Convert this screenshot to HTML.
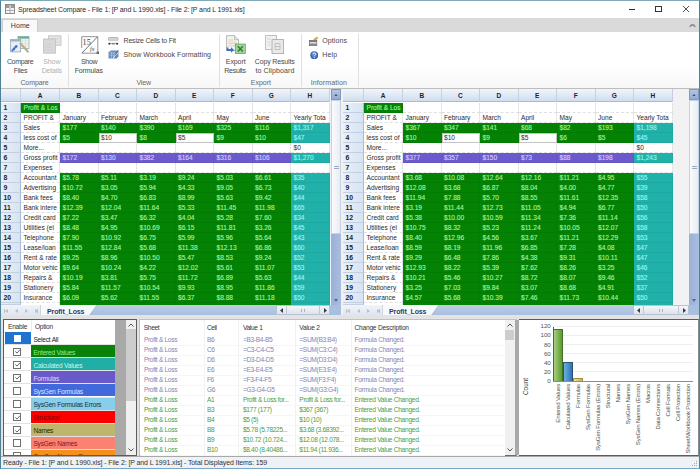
<!DOCTYPE html><html><head><meta charset="utf-8"><style>

*{box-sizing:border-box;margin:0;padding:0}
html,body{width:700px;height:469px;overflow:hidden;background:#fff;font-family:"Liberation Sans", sans-serif;position:relative}
div,span,svg{position:absolute}
.t{white-space:nowrap;line-height:1}
.hdr{background:linear-gradient(#f1f5fb,#d0ddef);border-right:1px solid #c3d0e2;border-bottom:1px solid #a9bcd6;font-size:6.5px;font-weight:bold;color:#1e1e1e;text-align:center;line-height:14px}
.rh{background:linear-gradient(90deg,#e9f0f9,#d8e4f3);border-right:1px solid #a9bcd6;border-bottom:1px solid #c3d0e2;font-size:6.8px;font-weight:bold;color:#1e1e1e;padding-left:2.5px;line-height:10px}
.cell{font-size:6.6px;line-height:10px;padding-left:2.5px;white-space:nowrap;overflow:hidden;border-right:1px dashed #e0e0e0;border-bottom:1px dashed #e0e0e0}
.cell.col{border-right:1px solid rgba(0,0,0,0.035);border-bottom:1px solid rgba(0,0,0,0.05);-webkit-text-stroke:0.12px currentColor}
.cell.boxed{border:1px solid #c4c4c4;background:#fff;line-height:8px;padding-left:1.5px}

</style></head><body>
<div style="left:0;top:0;width:700px;height:469px;border:1px solid #4f8196;border-top-color:#7fa9b6;border-bottom-color:#7aa6c8;z-index:50"></div>
<svg style="left:5px;top:4px" width="10" height="10" viewBox="0 0 10 10"><rect x="0.5" y="0.5" width="9" height="9" fill="#f4f4f4" stroke="#8a8a8a"/><rect x="1" y="1" width="3.5" height="3" fill="#9a9a9a"/><rect x="5.5" y="1" width="3.5" height="3" fill="#9a9a9a"/><path d="M1 6.5h8M5 4v5.5" stroke="#9a9a9a" stroke-width="0.8"/></svg>
<div class="t" style="left:17.90px;top:6px;font-size:7px;color:#2a2a2a;letter-spacing:-0.125px">Spreadsheet Compare - File 1: [P and L 1990.xls] - File 2: [P and L 1991.xls]</div>
<div style="left:629.3px;top:8.6px;width:5.7px;height:0.9px;background:#333"></div>
<div style="left:655.4px;top:6.3px;width:6.3px;height:5.8px;border:0.9px solid #333"></div>
<svg style="left:682.9px;top:6.4px" width="6" height="6" viewBox="0 0 6 6"><path d="M0 0L6 6M6 0L0 6" stroke="#333" stroke-width="0.85"/></svg>
<div style="left:1px;top:18px;width:698px;height:14.2px;background:#dadada"></div>
<div style="left:2.1px;top:18.5px;width:35.8px;height:14.5px;background:#f9f9f9;border:1px solid #cfcfcf;border-bottom:none"></div>
<div class="t" style="left:10.80px;top:22px;font-size:7px;color:#333;letter-spacing:0.076px">Home</div>
<svg style="left:689px;top:22.5px" width="7" height="5" viewBox="0 0 7 5"><path d="M0.8 4.2A2.7 2.7 0 0 1 6.2 4.2M2 3.5L3.5 2L5 3.5" stroke="#666" stroke-width="0.8" fill="none"/></svg>
<div style="left:1px;top:32.2px;width:698px;height:56.5px;background:linear-gradient(#fff 60%,#f7f7f7);border-bottom:1.3px solid #bdbdbd"></div>
<div style="left:68.4px;top:34px;width:1px;height:53px;background:#e0e0e0"></div>
<div style="left:218.5px;top:34px;width:1px;height:53px;background:#e0e0e0"></div>
<div style="left:301.2px;top:34px;width:1px;height:53px;background:#e0e0e0"></div>
<div style="left:357.9px;top:34px;width:1px;height:53px;background:#e0e0e0"></div>
<div class="t" style="left:6.90px;top:58px;font-size:7px;color:#484848;letter-spacing:-0.348px">Compare</div>
<div class="t" style="left:13.80px;top:67px;font-size:7px;color:#484848;letter-spacing:-0.270px">Files</div>
<div class="t" style="left:43.20px;top:58px;font-size:7px;color:#b0b0b0;letter-spacing:-0.070px">Show</div>
<div class="t" style="left:41.70px;top:67px;font-size:7px;color:#b0b0b0;letter-spacing:-0.166px">Details</div>
<div class="t" style="left:20.40px;top:79px;font-size:7px;color:#666;letter-spacing:-0.082px">Compare</div>
<div class="t" style="left:81.00px;top:58px;font-size:7px;color:#484848;letter-spacing:-0.337px">Show</div>
<div class="t" style="left:74.70px;top:67px;font-size:7px;color:#484848;letter-spacing:-0.125px">Formulas</div>
<div class="t" style="left:123.60px;top:37px;font-size:7px;color:#484848;letter-spacing:-0.222px">Resize Cells to Fit</div>
<div class="t" style="left:123.60px;top:51px;font-size:7px;color:#484848;letter-spacing:0.050px">Show Workbook Formatting</div>
<div class="t" style="left:136.40px;top:79px;font-size:7px;color:#666;letter-spacing:-0.115px">View</div>
<div class="t" style="left:225.80px;top:58px;font-size:7px;color:#484848;letter-spacing:-0.086px">Export</div>
<div class="t" style="left:224.30px;top:67px;font-size:7px;color:#484848;letter-spacing:-0.274px">Results</div>
<div class="t" style="left:254.80px;top:58px;font-size:7px;color:#484848;letter-spacing:-0.157px">Copy Results</div>
<div class="t" style="left:255.40px;top:67px;font-size:7px;color:#484848;letter-spacing:0.105px">to Clipboard</div>
<div class="t" style="left:250.80px;top:79px;font-size:7px;color:#666;letter-spacing:-0.026px">Export</div>
<div class="t" style="left:322.20px;top:37px;font-size:7px;color:#484848;letter-spacing:0.096px">Options</div>
<div class="t" style="left:322.20px;top:51px;font-size:7px;color:#484848;letter-spacing:0.201px">Help</div>
<div class="t" style="left:310.70px;top:79px;font-size:7px;color:#666;letter-spacing:0.118px">Information</div>
<svg style="position:absolute;left:10px;top:35.5px" width="20" height="17" viewBox="0 0 20 17"><rect x="8" y="0.5" width="11" height="12" fill="#f2f6f4" stroke="#8fb0a6" stroke-width="0.8"/><rect x="8" y="0.5" width="11" height="2.2" fill="#6fae9c"/><path d="M8.5 5h10M8.5 7.5h10M8.5 10h10M12 3v9M15.5 3v9" stroke="#c9d6d2" stroke-width="0.6"/><rect x="0.6" y="3.5" width="10" height="12.4" fill="#e6edf4" stroke="#94a8b8" stroke-width="0.8"/><rect x="0.6" y="3.5" width="10" height="2" fill="#9fb3bf"/><path d="M2 15L7 9.5" stroke="#3d6ec4" stroke-width="2.4"/><path d="M2.5 13.5l1.5 1.5M4.5 11.5l1.5 1.5" stroke="#9ec0ee" stroke-width="0.8"/><path d="M10 7L18.5 16.2" stroke="#b8ad8a" stroke-width="2"/></svg>
<svg style="position:absolute;left:42.5px;top:35px" width="19" height="19" viewBox="0 0 19 19"><rect x="5.5" y="0.8" width="12.5" height="9.5" fill="#e4e4e4" stroke="#c6c6c6" stroke-width="0.9"/><path d="M8 4h8M8 7h8" stroke="#cfcfcf" stroke-width="0.7"/><rect x="0.6" y="4" width="11.8" height="14.2" fill="#d9d9d9" stroke="#c2c2c2" stroke-width="0.9"/><path d="M2.5 9h7M2.5 12h7M2.5 15h7" stroke="#c8c8c8" stroke-width="0.7"/></svg>
<svg style="position:absolute;left:80.5px;top:36px" width="18" height="18" viewBox="0 0 18 18"><path d="M0.7 12V0.7H16.8V17.2H0.7" fill="none" stroke="#8a8a8a" stroke-width="0.9"/><path d="M1 17L16.5 0.8" stroke="#666" stroke-width="0.9"/><text x="1.6" y="8.6" font-size="8.2" font-family="Liberation Serif" fill="#444">15</text><text x="9" y="15.2" font-size="6.3" font-style="italic" font-family="Liberation Serif" fill="#444">fx</text><rect x="15.6" y="15.6" width="2.4" height="2.4" fill="#666"/></svg>
<svg style="position:absolute;left:108px;top:36.5px" width="10.5" height="8.5" viewBox="0 0 10.5 8.5"><rect x="0.5" y="0.5" width="9.5" height="3.2" rx="0.8" fill="#d2d2d2" stroke="#a6a6a6" stroke-width="0.7"/><rect x="0.8" y="3.7" width="9" height="2.2" fill="#f6f6f6"/><path d="M1 6.6h8.5" stroke="#8a8a8a" stroke-width="0.8"/><circle cx="1.3" cy="6.8" r="1" fill="#333"/><circle cx="9.2" cy="6.8" r="1" fill="#333"/><path d="M4 7.2q1.2-1 2.5 0" stroke="#555" stroke-width="0.8" fill="none"/></svg>
<svg style="position:absolute;left:108px;top:50px" width="11" height="9" viewBox="0 0 11 9"><path d="M0.5 2L3 0.5H10.5V7L8 8.5H0.5z" fill="#6d8fbf"/><path d="M1.5 3h6M1.5 5.2h6M3.5 2v6M6 2v6" stroke="#b6cae6" stroke-width="0.6"/><path d="M5 8L10 3" stroke="#e4eef8" stroke-width="0.9"/><path d="M8 2V8.5M8 2L10.5 0.5" stroke="#4e6e9e" stroke-width="0.6"/></svg>
<svg style="position:absolute;left:226px;top:35px" width="20" height="19" viewBox="0 0 20 19"><path d="M0.6 0.6H8.5L12.5 4.6V15.5H0.6z" fill="#f3f3f3" stroke="#a8a8a8" stroke-width="0.8"/><path d="M8.5 0.6V4.6H12.5" fill="#e0e0e0" stroke="#a8a8a8" stroke-width="0.6"/><path d="M2.5 5h5M2.5 8.6h8M2.5 11h8" stroke="#c4c4c4" stroke-width="0.7"/><rect x="2" y="6.3" width="9" height="1.4" fill="#efe2b0"/><rect x="9.3" y="9" width="10" height="9.5" fill="#9fd49a" stroke="#5a9a5a" stroke-width="0.7"/><path d="M11.8 11.2l5 5.2M16.8 11.2l-5 5.2" stroke="#2f7f2f" stroke-width="1.5"/><path d="M1.5 12.5v2.5h4" stroke="#3f6fbf" stroke-width="1.8" fill="none"/><path d="M5 12.3L8.2 15L5 17.8z" fill="#3f6fbf"/></svg>
<svg style="position:absolute;left:265px;top:35px" width="20" height="19" viewBox="0 0 20 19"><rect x="0.6" y="0.6" width="11" height="14" fill="#f1f1f1" stroke="#b2b2b2" stroke-width="0.8"/><path d="M2.5 4h3M2.5 7h3M2.5 10h3" stroke="#c8c8c8" stroke-width="0.8"/><rect x="7" y="4.6" width="11.6" height="14" fill="#e9e9e9" stroke="#a6a6a6" stroke-width="0.8"/><path d="M10 8.5h5v6h-5z" fill="none" stroke="#b8b8b8" stroke-width="0.8"/><path d="M10 11.5h5" stroke="#b8b8b8" stroke-width="0.8"/></svg>
<svg style="position:absolute;left:308.5px;top:35.5px" width="10" height="10" viewBox="0 0 10 10"><path d="M4 3.5L7.5 0.5L9.6 2.3L6.5 4.8z" fill="#d7c468"/><path d="M5 4.2L8.5 1.5" stroke="#9c8a30" stroke-width="0.6"/><rect x="0.3" y="4.5" width="7.5" height="5.2" fill="#e6e6e6" stroke="#5a5a5a" stroke-width="0.7"/><rect x="0.3" y="4.5" width="7.5" height="1.6" fill="#7a7a7a"/><path d="M1 8.2h6" stroke="#444" stroke-width="0.9"/></svg>
<svg style="position:absolute;left:309.5px;top:50.8px" width="8.5" height="8.5" viewBox="0 0 8.5 8.5"><circle cx="4.25" cy="4.25" r="4" fill="#3f67b4"/><circle cx="4.25" cy="3.5" r="2.6" fill="#6f95d6" opacity="0.6"/><path d="M2.9 3.3q0-1.4 1.4-1.4q1.4 0 1.4 1.2q0 0.8-1 1.2q-0.4 0.2-0.4 0.9" stroke="#fff" stroke-width="0.9" fill="none"/><circle cx="4.3" cy="6.5" r="0.55" fill="#fff"/></svg>
<div class="hdr" style="left:1px;top:89.3px;width:20px;height:13.2px"></div>
<div class="hdr" style="left:21px;top:89.3px;width:39px;height:13.2px">A</div>
<div class="hdr" style="left:60px;top:89.3px;width:38.5px;height:13.2px">B</div>
<div class="hdr" style="left:98.5px;top:89.3px;width:38.5px;height:13.2px">C</div>
<div class="hdr" style="left:137px;top:89.3px;width:38.5px;height:13.2px">D</div>
<div class="hdr" style="left:175.5px;top:89.3px;width:38.5px;height:13.2px">E</div>
<div class="hdr" style="left:214px;top:89.3px;width:38.5px;height:13.2px">F</div>
<div class="hdr" style="left:252.5px;top:89.3px;width:38.5px;height:13.2px">G</div>
<div class="hdr" style="left:291px;top:89.3px;width:38.5px;height:13.2px">H</div>
<div class="rh" style="left:1px;top:102.5px;width:20px;height:10.03px">1</div>
<div class="rh" style="left:1px;top:112.53px;width:20px;height:10.03px">2</div>
<div class="rh" style="left:1px;top:122.56px;width:20px;height:10.03px">3</div>
<div class="rh" style="left:1px;top:132.59px;width:20px;height:10.03px">4</div>
<div class="rh" style="left:1px;top:142.62px;width:20px;height:10.03px">5</div>
<div class="rh" style="left:1px;top:152.65px;width:20px;height:10.03px">6</div>
<div class="rh" style="left:1px;top:162.68px;width:20px;height:10.03px">7</div>
<div class="rh" style="left:1px;top:172.70999999999998px;width:20px;height:10.03px">8</div>
<div class="rh" style="left:1px;top:182.74px;width:20px;height:10.03px">9</div>
<div class="rh" style="left:1px;top:192.76999999999998px;width:20px;height:10.03px">10</div>
<div class="rh" style="left:1px;top:202.8px;width:20px;height:10.03px">11</div>
<div class="rh" style="left:1px;top:212.82999999999998px;width:20px;height:10.03px">12</div>
<div class="rh" style="left:1px;top:222.85999999999999px;width:20px;height:10.03px">13</div>
<div class="rh" style="left:1px;top:232.89px;width:20px;height:10.03px">14</div>
<div class="rh" style="left:1px;top:242.92px;width:20px;height:10.03px">15</div>
<div class="rh" style="left:1px;top:252.95px;width:20px;height:10.03px">16</div>
<div class="rh" style="left:1px;top:262.98px;width:20px;height:10.03px">17</div>
<div class="rh" style="left:1px;top:273.01px;width:20px;height:10.03px">18</div>
<div class="rh" style="left:1px;top:283.03999999999996px;width:20px;height:10.03px">19</div>
<div class="rh" style="left:1px;top:293.07px;width:20px;height:10.03px">20</div>
<div class="rh" style="left:1px;top:303.1px;width:20px;height:2.099999999999966px"></div>
<div class="cell col" style="left:21px;top:102.5px;width:39px;height:10.03px;color:#a6f2a2;background:#048204;">Profit & Los</div>
<div class="cell" style="left:60px;top:102.5px;width:38.5px;height:10.03px;color:#2a2a2a;"></div>
<div class="cell" style="left:98.5px;top:102.5px;width:38.5px;height:10.03px;color:#2a2a2a;"></div>
<div class="cell" style="left:137px;top:102.5px;width:38.5px;height:10.03px;color:#2a2a2a;"></div>
<div class="cell" style="left:175.5px;top:102.5px;width:38.5px;height:10.03px;color:#2a2a2a;"></div>
<div class="cell" style="left:214px;top:102.5px;width:38.5px;height:10.03px;color:#2a2a2a;"></div>
<div class="cell" style="left:252.5px;top:102.5px;width:38.5px;height:10.03px;color:#2a2a2a;"></div>
<div class="cell" style="left:291px;top:102.5px;width:38.5px;height:10.03px;color:#2a2a2a;"></div>
<div class="cell" style="left:21px;top:112.53px;width:39px;height:10.03px;color:#2a2a2a;">PROFIT &</div>
<div class="cell" style="left:60px;top:112.53px;width:38.5px;height:10.03px;color:#2a2a2a;">January</div>
<div class="cell" style="left:98.5px;top:112.53px;width:38.5px;height:10.03px;color:#2a2a2a;">February</div>
<div class="cell" style="left:137px;top:112.53px;width:38.5px;height:10.03px;color:#2a2a2a;">March</div>
<div class="cell" style="left:175.5px;top:112.53px;width:38.5px;height:10.03px;color:#2a2a2a;">April</div>
<div class="cell" style="left:214px;top:112.53px;width:38.5px;height:10.03px;color:#2a2a2a;">May</div>
<div class="cell" style="left:252.5px;top:112.53px;width:38.5px;height:10.03px;color:#2a2a2a;">June</div>
<div class="cell" style="left:291px;top:112.53px;width:38.5px;height:10.03px;color:#2a2a2a;">Yearly Tota</div>
<div class="cell" style="left:21px;top:122.56px;width:39px;height:10.03px;color:#2a2a2a;">Sales</div>
<div class="cell col" style="left:60px;top:122.56px;width:38.5px;height:10.03px;color:#a6f2a2;background:#048204;">$177</div>
<div class="cell col" style="left:98.5px;top:122.56px;width:38.5px;height:10.03px;color:#a6f2a2;background:#048204;">$140</div>
<div class="cell col" style="left:137px;top:122.56px;width:38.5px;height:10.03px;color:#a6f2a2;background:#048204;">$390</div>
<div class="cell col" style="left:175.5px;top:122.56px;width:38.5px;height:10.03px;color:#a6f2a2;background:#048204;">$169</div>
<div class="cell col" style="left:214px;top:122.56px;width:38.5px;height:10.03px;color:#a6f2a2;background:#048204;">$325</div>
<div class="cell col" style="left:252.5px;top:122.56px;width:38.5px;height:10.03px;color:#a6f2a2;background:#048204;">$116</div>
<div class="cell col" style="left:291px;top:122.56px;width:38.5px;height:10.03px;color:#9ef4ec;background:#20b2aa;">$1,317</div>
<div class="cell" style="left:21px;top:132.59px;width:39px;height:10.03px;color:#2a2a2a;">less cost of</div>
<div class="cell col" style="left:60px;top:132.59px;width:38.5px;height:10.03px;color:#a6f2a2;background:#048204;">$5</div>
<div class="cell boxed" style="left:98.5px;top:132.59px;width:38.5px;height:10.03px;color:#2a2a2a;">$10</div>
<div class="cell col" style="left:137px;top:132.59px;width:38.5px;height:10.03px;color:#a6f2a2;background:#048204;">$8</div>
<div class="cell boxed" style="left:175.5px;top:132.59px;width:38.5px;height:10.03px;color:#2a2a2a;">$5</div>
<div class="cell col" style="left:214px;top:132.59px;width:38.5px;height:10.03px;color:#a6f2a2;background:#048204;">$9</div>
<div class="cell col" style="left:252.5px;top:132.59px;width:38.5px;height:10.03px;color:#a6f2a2;background:#048204;">$10</div>
<div class="cell col" style="left:291px;top:132.59px;width:38.5px;height:10.03px;color:#9ef4ec;background:#20b2aa;">$47</div>
<div class="cell" style="left:21px;top:142.62px;width:39px;height:10.03px;color:#2a2a2a;">More...</div>
<div class="cell" style="left:60px;top:142.62px;width:38.5px;height:10.03px;color:#2a2a2a;"></div>
<div class="cell" style="left:98.5px;top:142.62px;width:38.5px;height:10.03px;color:#2a2a2a;"></div>
<div class="cell" style="left:137px;top:142.62px;width:38.5px;height:10.03px;color:#2a2a2a;"></div>
<div class="cell" style="left:175.5px;top:142.62px;width:38.5px;height:10.03px;color:#2a2a2a;"></div>
<div class="cell" style="left:214px;top:142.62px;width:38.5px;height:10.03px;color:#2a2a2a;"></div>
<div class="cell" style="left:252.5px;top:142.62px;width:38.5px;height:10.03px;color:#2a2a2a;"></div>
<div class="cell" style="left:291px;top:142.62px;width:38.5px;height:10.03px;color:#2a2a2a;">$0</div>
<div class="cell" style="left:21px;top:152.65px;width:39px;height:10.03px;color:#2a2a2a;">Gross profit</div>
<div class="cell col" style="left:60px;top:152.65px;width:38.5px;height:10.03px;color:#d4ceff;background:#6a5acd;">$172</div>
<div class="cell col" style="left:98.5px;top:152.65px;width:38.5px;height:10.03px;color:#d4ceff;background:#6a5acd;">$130</div>
<div class="cell col" style="left:137px;top:152.65px;width:38.5px;height:10.03px;color:#d4ceff;background:#6a5acd;">$382</div>
<div class="cell col" style="left:175.5px;top:152.65px;width:38.5px;height:10.03px;color:#d4ceff;background:#6a5acd;">$164</div>
<div class="cell col" style="left:214px;top:152.65px;width:38.5px;height:10.03px;color:#d4ceff;background:#6a5acd;">$316</div>
<div class="cell col" style="left:252.5px;top:152.65px;width:38.5px;height:10.03px;color:#d4ceff;background:#6a5acd;">$106</div>
<div class="cell col" style="left:291px;top:152.65px;width:38.5px;height:10.03px;color:#9ef4ec;background:#20b2aa;">$1,270</div>
<div class="cell" style="left:21px;top:162.68px;width:39px;height:10.03px;color:#2a2a2a;">Expenses</div>
<div class="cell" style="left:60px;top:162.68px;width:38.5px;height:10.03px;color:#2a2a2a;"></div>
<div class="cell" style="left:98.5px;top:162.68px;width:38.5px;height:10.03px;color:#2a2a2a;"></div>
<div class="cell" style="left:137px;top:162.68px;width:38.5px;height:10.03px;color:#2a2a2a;"></div>
<div class="cell" style="left:175.5px;top:162.68px;width:38.5px;height:10.03px;color:#2a2a2a;"></div>
<div class="cell" style="left:214px;top:162.68px;width:38.5px;height:10.03px;color:#2a2a2a;"></div>
<div class="cell" style="left:252.5px;top:162.68px;width:38.5px;height:10.03px;color:#2a2a2a;"></div>
<div class="cell" style="left:291px;top:162.68px;width:38.5px;height:10.03px;color:#2a2a2a;"></div>
<div class="cell" style="left:21px;top:172.70999999999998px;width:39px;height:10.03px;color:#2a2a2a;">Accountant</div>
<div class="cell col" style="left:60px;top:172.70999999999998px;width:38.5px;height:10.03px;color:#a6f2a2;background:#048204;">$5.78</div>
<div class="cell col" style="left:98.5px;top:172.70999999999998px;width:38.5px;height:10.03px;color:#a6f2a2;background:#048204;">$5.11</div>
<div class="cell col" style="left:137px;top:172.70999999999998px;width:38.5px;height:10.03px;color:#a6f2a2;background:#048204;">$3.19</div>
<div class="cell col" style="left:175.5px;top:172.70999999999998px;width:38.5px;height:10.03px;color:#a6f2a2;background:#048204;">$9.24</div>
<div class="cell col" style="left:214px;top:172.70999999999998px;width:38.5px;height:10.03px;color:#a6f2a2;background:#048204;">$5.03</div>
<div class="cell col" style="left:252.5px;top:172.70999999999998px;width:38.5px;height:10.03px;color:#a6f2a2;background:#048204;">$6.61</div>
<div class="cell col" style="left:291px;top:172.70999999999998px;width:38.5px;height:10.03px;color:#9ef4ec;background:#20b2aa;">$35</div>
<div class="cell" style="left:21px;top:182.74px;width:39px;height:10.03px;color:#2a2a2a;">Advertising</div>
<div class="cell col" style="left:60px;top:182.74px;width:38.5px;height:10.03px;color:#a6f2a2;background:#048204;">$10.72</div>
<div class="cell col" style="left:98.5px;top:182.74px;width:38.5px;height:10.03px;color:#a6f2a2;background:#048204;">$3.05</div>
<div class="cell col" style="left:137px;top:182.74px;width:38.5px;height:10.03px;color:#a6f2a2;background:#048204;">$5.94</div>
<div class="cell col" style="left:175.5px;top:182.74px;width:38.5px;height:10.03px;color:#a6f2a2;background:#048204;">$4.33</div>
<div class="cell col" style="left:214px;top:182.74px;width:38.5px;height:10.03px;color:#a6f2a2;background:#048204;">$9.05</div>
<div class="cell col" style="left:252.5px;top:182.74px;width:38.5px;height:10.03px;color:#a6f2a2;background:#048204;">$6.73</div>
<div class="cell col" style="left:291px;top:182.74px;width:38.5px;height:10.03px;color:#9ef4ec;background:#20b2aa;">$40</div>
<div class="cell" style="left:21px;top:192.76999999999998px;width:39px;height:10.03px;color:#2a2a2a;">Bank fees</div>
<div class="cell col" style="left:60px;top:192.76999999999998px;width:38.5px;height:10.03px;color:#a6f2a2;background:#048204;">$8.40</div>
<div class="cell col" style="left:98.5px;top:192.76999999999998px;width:38.5px;height:10.03px;color:#a6f2a2;background:#048204;">$4.70</div>
<div class="cell col" style="left:137px;top:192.76999999999998px;width:38.5px;height:10.03px;color:#a6f2a2;background:#048204;">$6.83</div>
<div class="cell col" style="left:175.5px;top:192.76999999999998px;width:38.5px;height:10.03px;color:#a6f2a2;background:#048204;">$8.99</div>
<div class="cell col" style="left:214px;top:192.76999999999998px;width:38.5px;height:10.03px;color:#a6f2a2;background:#048204;">$5.63</div>
<div class="cell col" style="left:252.5px;top:192.76999999999998px;width:38.5px;height:10.03px;color:#a6f2a2;background:#048204;">$9.42</div>
<div class="cell col" style="left:291px;top:192.76999999999998px;width:38.5px;height:10.03px;color:#9ef4ec;background:#20b2aa;">$44</div>
<div class="cell" style="left:21px;top:202.8px;width:39px;height:10.03px;color:#2a2a2a;">Bank intere</div>
<div class="cell col" style="left:60px;top:202.8px;width:38.5px;height:10.03px;color:#a6f2a2;background:#048204;">$12.39</div>
<div class="cell col" style="left:98.5px;top:202.8px;width:38.5px;height:10.03px;color:#a6f2a2;background:#048204;">$12.04</div>
<div class="cell col" style="left:137px;top:202.8px;width:38.5px;height:10.03px;color:#a6f2a2;background:#048204;">$11.64</div>
<div class="cell col" style="left:175.5px;top:202.8px;width:38.5px;height:10.03px;color:#a6f2a2;background:#048204;">$5.33</div>
<div class="cell col" style="left:214px;top:202.8px;width:38.5px;height:10.03px;color:#a6f2a2;background:#048204;">$11.45</div>
<div class="cell col" style="left:252.5px;top:202.8px;width:38.5px;height:10.03px;color:#a6f2a2;background:#048204;">$11.98</div>
<div class="cell col" style="left:291px;top:202.8px;width:38.5px;height:10.03px;color:#9ef4ec;background:#20b2aa;">$65</div>
<div class="cell" style="left:21px;top:212.82999999999998px;width:39px;height:10.03px;color:#2a2a2a;">Credit card</div>
<div class="cell col" style="left:60px;top:212.82999999999998px;width:38.5px;height:10.03px;color:#a6f2a2;background:#048204;">$7.22</div>
<div class="cell col" style="left:98.5px;top:212.82999999999998px;width:38.5px;height:10.03px;color:#a6f2a2;background:#048204;">$3.47</div>
<div class="cell col" style="left:137px;top:212.82999999999998px;width:38.5px;height:10.03px;color:#a6f2a2;background:#048204;">$6.32</div>
<div class="cell col" style="left:175.5px;top:212.82999999999998px;width:38.5px;height:10.03px;color:#a6f2a2;background:#048204;">$4.04</div>
<div class="cell col" style="left:214px;top:212.82999999999998px;width:38.5px;height:10.03px;color:#a6f2a2;background:#048204;">$5.28</div>
<div class="cell col" style="left:252.5px;top:212.82999999999998px;width:38.5px;height:10.03px;color:#a6f2a2;background:#048204;">$7.60</div>
<div class="cell col" style="left:291px;top:212.82999999999998px;width:38.5px;height:10.03px;color:#9ef4ec;background:#20b2aa;">$34</div>
<div class="cell" style="left:21px;top:222.85999999999999px;width:39px;height:10.03px;color:#2a2a2a;">Utilities (el</div>
<div class="cell col" style="left:60px;top:222.85999999999999px;width:38.5px;height:10.03px;color:#a6f2a2;background:#048204;">$8.48</div>
<div class="cell col" style="left:98.5px;top:222.85999999999999px;width:38.5px;height:10.03px;color:#a6f2a2;background:#048204;">$4.95</div>
<div class="cell col" style="left:137px;top:222.85999999999999px;width:38.5px;height:10.03px;color:#a6f2a2;background:#048204;">$10.69</div>
<div class="cell col" style="left:175.5px;top:222.85999999999999px;width:38.5px;height:10.03px;color:#a6f2a2;background:#048204;">$6.15</div>
<div class="cell col" style="left:214px;top:222.85999999999999px;width:38.5px;height:10.03px;color:#a6f2a2;background:#048204;">$11.81</div>
<div class="cell col" style="left:252.5px;top:222.85999999999999px;width:38.5px;height:10.03px;color:#a6f2a2;background:#048204;">$3.26</div>
<div class="cell col" style="left:291px;top:222.85999999999999px;width:38.5px;height:10.03px;color:#9ef4ec;background:#20b2aa;">$45</div>
<div class="cell" style="left:21px;top:232.89px;width:39px;height:10.03px;color:#2a2a2a;">Telephone</div>
<div class="cell col" style="left:60px;top:232.89px;width:38.5px;height:10.03px;color:#a6f2a2;background:#048204;">$7.90</div>
<div class="cell col" style="left:98.5px;top:232.89px;width:38.5px;height:10.03px;color:#a6f2a2;background:#048204;">$10.92</div>
<div class="cell col" style="left:137px;top:232.89px;width:38.5px;height:10.03px;color:#a6f2a2;background:#048204;">$6.75</div>
<div class="cell col" style="left:175.5px;top:232.89px;width:38.5px;height:10.03px;color:#a6f2a2;background:#048204;">$5.99</div>
<div class="cell col" style="left:214px;top:232.89px;width:38.5px;height:10.03px;color:#a6f2a2;background:#048204;">$5.96</div>
<div class="cell col" style="left:252.5px;top:232.89px;width:38.5px;height:10.03px;color:#a6f2a2;background:#048204;">$5.64</div>
<div class="cell col" style="left:291px;top:232.89px;width:38.5px;height:10.03px;color:#9ef4ec;background:#20b2aa;">$43</div>
<div class="cell" style="left:21px;top:242.92px;width:39px;height:10.03px;color:#2a2a2a;">Lease/loan</div>
<div class="cell col" style="left:60px;top:242.92px;width:38.5px;height:10.03px;color:#a6f2a2;background:#048204;">$11.55</div>
<div class="cell col" style="left:98.5px;top:242.92px;width:38.5px;height:10.03px;color:#a6f2a2;background:#048204;">$12.84</div>
<div class="cell col" style="left:137px;top:242.92px;width:38.5px;height:10.03px;color:#a6f2a2;background:#048204;">$5.68</div>
<div class="cell col" style="left:175.5px;top:242.92px;width:38.5px;height:10.03px;color:#a6f2a2;background:#048204;">$11.38</div>
<div class="cell col" style="left:214px;top:242.92px;width:38.5px;height:10.03px;color:#a6f2a2;background:#048204;">$12.13</div>
<div class="cell col" style="left:252.5px;top:242.92px;width:38.5px;height:10.03px;color:#a6f2a2;background:#048204;">$6.86</div>
<div class="cell col" style="left:291px;top:242.92px;width:38.5px;height:10.03px;color:#9ef4ec;background:#20b2aa;">$60</div>
<div class="cell" style="left:21px;top:252.95px;width:39px;height:10.03px;color:#2a2a2a;">Rent & rate</div>
<div class="cell col" style="left:60px;top:252.95px;width:38.5px;height:10.03px;color:#a6f2a2;background:#048204;">$9.25</div>
<div class="cell col" style="left:98.5px;top:252.95px;width:38.5px;height:10.03px;color:#a6f2a2;background:#048204;">$8.96</div>
<div class="cell col" style="left:137px;top:252.95px;width:38.5px;height:10.03px;color:#a6f2a2;background:#048204;">$10.50</div>
<div class="cell col" style="left:175.5px;top:252.95px;width:38.5px;height:10.03px;color:#a6f2a2;background:#048204;">$5.47</div>
<div class="cell col" style="left:214px;top:252.95px;width:38.5px;height:10.03px;color:#a6f2a2;background:#048204;">$8.53</div>
<div class="cell col" style="left:252.5px;top:252.95px;width:38.5px;height:10.03px;color:#a6f2a2;background:#048204;">$9.24</div>
<div class="cell col" style="left:291px;top:252.95px;width:38.5px;height:10.03px;color:#9ef4ec;background:#20b2aa;">$52</div>
<div class="cell" style="left:21px;top:262.98px;width:39px;height:10.03px;color:#2a2a2a;">Motor vehic</div>
<div class="cell col" style="left:60px;top:262.98px;width:38.5px;height:10.03px;color:#a6f2a2;background:#048204;">$9.64</div>
<div class="cell col" style="left:98.5px;top:262.98px;width:38.5px;height:10.03px;color:#a6f2a2;background:#048204;">$10.24</div>
<div class="cell col" style="left:137px;top:262.98px;width:38.5px;height:10.03px;color:#a6f2a2;background:#048204;">$4.22</div>
<div class="cell col" style="left:175.5px;top:262.98px;width:38.5px;height:10.03px;color:#a6f2a2;background:#048204;">$12.02</div>
<div class="cell col" style="left:214px;top:262.98px;width:38.5px;height:10.03px;color:#a6f2a2;background:#048204;">$5.61</div>
<div class="cell col" style="left:252.5px;top:262.98px;width:38.5px;height:10.03px;color:#a6f2a2;background:#048204;">$11.07</div>
<div class="cell col" style="left:291px;top:262.98px;width:38.5px;height:10.03px;color:#9ef4ec;background:#20b2aa;">$53</div>
<div class="cell" style="left:21px;top:273.01px;width:39px;height:10.03px;color:#2a2a2a;">Repairs &</div>
<div class="cell col" style="left:60px;top:273.01px;width:38.5px;height:10.03px;color:#a6f2a2;background:#048204;">$10.19</div>
<div class="cell col" style="left:98.5px;top:273.01px;width:38.5px;height:10.03px;color:#a6f2a2;background:#048204;">$3.81</div>
<div class="cell col" style="left:137px;top:273.01px;width:38.5px;height:10.03px;color:#a6f2a2;background:#048204;">$5.75</div>
<div class="cell col" style="left:175.5px;top:273.01px;width:38.5px;height:10.03px;color:#a6f2a2;background:#048204;">$11.72</div>
<div class="cell col" style="left:214px;top:273.01px;width:38.5px;height:10.03px;color:#a6f2a2;background:#048204;">$6.89</div>
<div class="cell col" style="left:252.5px;top:273.01px;width:38.5px;height:10.03px;color:#a6f2a2;background:#048204;">$5.63</div>
<div class="cell col" style="left:291px;top:273.01px;width:38.5px;height:10.03px;color:#9ef4ec;background:#20b2aa;">$44</div>
<div class="cell" style="left:21px;top:283.03999999999996px;width:39px;height:10.03px;color:#2a2a2a;">Stationery</div>
<div class="cell col" style="left:60px;top:283.03999999999996px;width:38.5px;height:10.03px;color:#a6f2a2;background:#048204;">$5.84</div>
<div class="cell col" style="left:98.5px;top:283.03999999999996px;width:38.5px;height:10.03px;color:#a6f2a2;background:#048204;">$11.57</div>
<div class="cell col" style="left:137px;top:283.03999999999996px;width:38.5px;height:10.03px;color:#a6f2a2;background:#048204;">$10.54</div>
<div class="cell col" style="left:175.5px;top:283.03999999999996px;width:38.5px;height:10.03px;color:#a6f2a2;background:#048204;">$9.93</div>
<div class="cell col" style="left:214px;top:283.03999999999996px;width:38.5px;height:10.03px;color:#a6f2a2;background:#048204;">$8.95</div>
<div class="cell col" style="left:252.5px;top:283.03999999999996px;width:38.5px;height:10.03px;color:#a6f2a2;background:#048204;">$11.86</div>
<div class="cell col" style="left:291px;top:283.03999999999996px;width:38.5px;height:10.03px;color:#9ef4ec;background:#20b2aa;">$59</div>
<div class="cell" style="left:21px;top:293.07px;width:39px;height:10.03px;color:#2a2a2a;">Insurance</div>
<div class="cell col" style="left:60px;top:293.07px;width:38.5px;height:10.03px;color:#a6f2a2;background:#048204;">$6.09</div>
<div class="cell col" style="left:98.5px;top:293.07px;width:38.5px;height:10.03px;color:#a6f2a2;background:#048204;">$5.62</div>
<div class="cell col" style="left:137px;top:293.07px;width:38.5px;height:10.03px;color:#a6f2a2;background:#048204;">$11.55</div>
<div class="cell col" style="left:175.5px;top:293.07px;width:38.5px;height:10.03px;color:#a6f2a2;background:#048204;">$6.37</div>
<div class="cell col" style="left:214px;top:293.07px;width:38.5px;height:10.03px;color:#a6f2a2;background:#048204;">$8.88</div>
<div class="cell col" style="left:252.5px;top:293.07px;width:38.5px;height:10.03px;color:#a6f2a2;background:#048204;">$11.18</div>
<div class="cell col" style="left:291px;top:293.07px;width:38.5px;height:10.03px;color:#9ef4ec;background:#20b2aa;">$50</div>
<div class="cell" style="left:21px;top:303.1px;width:39px;height:2.099999999999966px;color:#333;border-bottom:none;"></div>
<div class="cell col" style="left:60px;top:303.1px;width:38.5px;height:2.099999999999966px;color:#a6f2a2;border-bottom:none;background:#048204;"></div>
<div class="cell col" style="left:98.5px;top:303.1px;width:38.5px;height:2.099999999999966px;color:#a6f2a2;border-bottom:none;background:#048204;"></div>
<div class="cell col" style="left:137px;top:303.1px;width:38.5px;height:2.099999999999966px;color:#a6f2a2;border-bottom:none;background:#048204;"></div>
<div class="cell col" style="left:175.5px;top:303.1px;width:38.5px;height:2.099999999999966px;color:#a6f2a2;border-bottom:none;background:#048204;"></div>
<div class="cell col" style="left:214px;top:303.1px;width:38.5px;height:2.099999999999966px;color:#a6f2a2;border-bottom:none;background:#048204;"></div>
<div class="cell col" style="left:252.5px;top:303.1px;width:38.5px;height:2.099999999999966px;color:#a6f2a2;border-bottom:none;background:#048204;"></div>
<div class="cell col" style="left:291px;top:303.1px;width:38.5px;height:2.099999999999966px;color:#9ef4ec;border-bottom:none;background:#20b2aa;"></div>
<div style="left:329.5px;top:89.3px;width:1.5px;height:215.7px;background:#eef2f8"></div>
<div style="left:331px;top:89.3px;width:10.3px;height:215.7px;background:linear-gradient(90deg,#9ab0d6,#a9bde0)"></div>
<div style="left:331px;top:89.3px;width:10.3px;height:11px;background:linear-gradient(#b3c5e2,#93aad2);border:1px solid #8299c2"></div>
<svg style="left:334.2px;top:93.89999999999999px" width="4" height="2.6" viewBox="0 0 4 2.6"><path d="M0 2.6L2 0L4 2.6z" fill="#34466e"/></svg>
<div style="left:331.3px;top:100.3px;width:9.7px;height:133.7px;background:linear-gradient(90deg,#fafbfd,#e8edf4);border:1px solid #c6d1e2"></div>
<div style="left:333.7px;top:166px;width:5px;height:3px;border-top:1px solid #9aa8c0;border-bottom:1px solid #9aa8c0"></div>
<svg style="left:334.2px;top:298.5px" width="4" height="3" viewBox="0 0 4 3"><path d="M0 0L2 3L4 0z" fill="#4a6aa8"/></svg>
<div style="left:341px;top:89px;width:2px;height:226px;background:#f2f2f2"></div>
<div class="hdr" style="left:343px;top:89.3px;width:21px;height:13.2px"></div>
<div class="hdr" style="left:364px;top:89.3px;width:39px;height:13.2px">A</div>
<div class="hdr" style="left:403px;top:89.3px;width:38.5px;height:13.2px">B</div>
<div class="hdr" style="left:441.5px;top:89.3px;width:38.5px;height:13.2px">C</div>
<div class="hdr" style="left:480px;top:89.3px;width:38.5px;height:13.2px">D</div>
<div class="hdr" style="left:518.5px;top:89.3px;width:38.5px;height:13.2px">E</div>
<div class="hdr" style="left:557px;top:89.3px;width:38.5px;height:13.2px">F</div>
<div class="hdr" style="left:595.5px;top:89.3px;width:38.5px;height:13.2px">G</div>
<div class="hdr" style="left:634px;top:89.3px;width:38.5px;height:13.2px">H</div>
<div class="rh" style="left:343px;top:102.5px;width:21px;height:10.03px">1</div>
<div class="rh" style="left:343px;top:112.53px;width:21px;height:10.03px">2</div>
<div class="rh" style="left:343px;top:122.56px;width:21px;height:10.03px">3</div>
<div class="rh" style="left:343px;top:132.59px;width:21px;height:10.03px">4</div>
<div class="rh" style="left:343px;top:142.62px;width:21px;height:10.03px">5</div>
<div class="rh" style="left:343px;top:152.65px;width:21px;height:10.03px">6</div>
<div class="rh" style="left:343px;top:162.68px;width:21px;height:10.03px">7</div>
<div class="rh" style="left:343px;top:172.70999999999998px;width:21px;height:10.03px">8</div>
<div class="rh" style="left:343px;top:182.74px;width:21px;height:10.03px">9</div>
<div class="rh" style="left:343px;top:192.76999999999998px;width:21px;height:10.03px">10</div>
<div class="rh" style="left:343px;top:202.8px;width:21px;height:10.03px">11</div>
<div class="rh" style="left:343px;top:212.82999999999998px;width:21px;height:10.03px">12</div>
<div class="rh" style="left:343px;top:222.85999999999999px;width:21px;height:10.03px">13</div>
<div class="rh" style="left:343px;top:232.89px;width:21px;height:10.03px">14</div>
<div class="rh" style="left:343px;top:242.92px;width:21px;height:10.03px">15</div>
<div class="rh" style="left:343px;top:252.95px;width:21px;height:10.03px">16</div>
<div class="rh" style="left:343px;top:262.98px;width:21px;height:10.03px">17</div>
<div class="rh" style="left:343px;top:273.01px;width:21px;height:10.03px">18</div>
<div class="rh" style="left:343px;top:283.03999999999996px;width:21px;height:10.03px">19</div>
<div class="rh" style="left:343px;top:293.07px;width:21px;height:10.03px">20</div>
<div class="rh" style="left:343px;top:303.1px;width:21px;height:2.099999999999966px"></div>
<div class="cell col" style="left:364px;top:102.5px;width:39px;height:10.03px;color:#a6f2a2;background:#048204;">Profit & Los</div>
<div class="cell" style="left:403px;top:102.5px;width:38.5px;height:10.03px;color:#2a2a2a;"></div>
<div class="cell" style="left:441.5px;top:102.5px;width:38.5px;height:10.03px;color:#2a2a2a;"></div>
<div class="cell" style="left:480px;top:102.5px;width:38.5px;height:10.03px;color:#2a2a2a;"></div>
<div class="cell" style="left:518.5px;top:102.5px;width:38.5px;height:10.03px;color:#2a2a2a;"></div>
<div class="cell" style="left:557px;top:102.5px;width:38.5px;height:10.03px;color:#2a2a2a;"></div>
<div class="cell" style="left:595.5px;top:102.5px;width:38.5px;height:10.03px;color:#2a2a2a;"></div>
<div class="cell" style="left:634px;top:102.5px;width:38.5px;height:10.03px;color:#2a2a2a;"></div>
<div class="cell" style="left:364px;top:112.53px;width:39px;height:10.03px;color:#2a2a2a;">PROFIT &</div>
<div class="cell" style="left:403px;top:112.53px;width:38.5px;height:10.03px;color:#2a2a2a;">January</div>
<div class="cell" style="left:441.5px;top:112.53px;width:38.5px;height:10.03px;color:#2a2a2a;">February</div>
<div class="cell" style="left:480px;top:112.53px;width:38.5px;height:10.03px;color:#2a2a2a;">March</div>
<div class="cell" style="left:518.5px;top:112.53px;width:38.5px;height:10.03px;color:#2a2a2a;">April</div>
<div class="cell" style="left:557px;top:112.53px;width:38.5px;height:10.03px;color:#2a2a2a;">May</div>
<div class="cell" style="left:595.5px;top:112.53px;width:38.5px;height:10.03px;color:#2a2a2a;">June</div>
<div class="cell" style="left:634px;top:112.53px;width:38.5px;height:10.03px;color:#2a2a2a;">Yearly Tota</div>
<div class="cell" style="left:364px;top:122.56px;width:39px;height:10.03px;color:#2a2a2a;">Sales</div>
<div class="cell col" style="left:403px;top:122.56px;width:38.5px;height:10.03px;color:#a6f2a2;background:#048204;">$367</div>
<div class="cell col" style="left:441.5px;top:122.56px;width:38.5px;height:10.03px;color:#a6f2a2;background:#048204;">$347</div>
<div class="cell col" style="left:480px;top:122.56px;width:38.5px;height:10.03px;color:#a6f2a2;background:#048204;">$141</div>
<div class="cell col" style="left:518.5px;top:122.56px;width:38.5px;height:10.03px;color:#a6f2a2;background:#048204;">$68</div>
<div class="cell col" style="left:557px;top:122.56px;width:38.5px;height:10.03px;color:#a6f2a2;background:#048204;">$82</div>
<div class="cell col" style="left:595.5px;top:122.56px;width:38.5px;height:10.03px;color:#a6f2a2;background:#048204;">$193</div>
<div class="cell col" style="left:634px;top:122.56px;width:38.5px;height:10.03px;color:#9ef4ec;background:#20b2aa;">$1,198</div>
<div class="cell" style="left:364px;top:132.59px;width:39px;height:10.03px;color:#2a2a2a;">less cost of</div>
<div class="cell col" style="left:403px;top:132.59px;width:38.5px;height:10.03px;color:#a6f2a2;background:#048204;">$10</div>
<div class="cell boxed" style="left:441.5px;top:132.59px;width:38.5px;height:10.03px;color:#2a2a2a;">$10</div>
<div class="cell col" style="left:480px;top:132.59px;width:38.5px;height:10.03px;color:#a6f2a2;background:#048204;">$9</div>
<div class="cell boxed" style="left:518.5px;top:132.59px;width:38.5px;height:10.03px;color:#2a2a2a;">$5</div>
<div class="cell col" style="left:557px;top:132.59px;width:38.5px;height:10.03px;color:#a6f2a2;background:#048204;">$6</div>
<div class="cell col" style="left:595.5px;top:132.59px;width:38.5px;height:10.03px;color:#a6f2a2;background:#048204;">$5</div>
<div class="cell col" style="left:634px;top:132.59px;width:38.5px;height:10.03px;color:#9ef4ec;background:#20b2aa;">$45</div>
<div class="cell" style="left:364px;top:142.62px;width:39px;height:10.03px;color:#2a2a2a;">More...</div>
<div class="cell" style="left:403px;top:142.62px;width:38.5px;height:10.03px;color:#2a2a2a;"></div>
<div class="cell" style="left:441.5px;top:142.62px;width:38.5px;height:10.03px;color:#2a2a2a;"></div>
<div class="cell" style="left:480px;top:142.62px;width:38.5px;height:10.03px;color:#2a2a2a;"></div>
<div class="cell" style="left:518.5px;top:142.62px;width:38.5px;height:10.03px;color:#2a2a2a;"></div>
<div class="cell" style="left:557px;top:142.62px;width:38.5px;height:10.03px;color:#2a2a2a;"></div>
<div class="cell" style="left:595.5px;top:142.62px;width:38.5px;height:10.03px;color:#2a2a2a;"></div>
<div class="cell" style="left:634px;top:142.62px;width:38.5px;height:10.03px;color:#2a2a2a;">$0</div>
<div class="cell" style="left:364px;top:152.65px;width:39px;height:10.03px;color:#2a2a2a;">Gross profit</div>
<div class="cell col" style="left:403px;top:152.65px;width:38.5px;height:10.03px;color:#d4ceff;background:#6a5acd;">$377</div>
<div class="cell col" style="left:441.5px;top:152.65px;width:38.5px;height:10.03px;color:#d4ceff;background:#6a5acd;">$357</div>
<div class="cell col" style="left:480px;top:152.65px;width:38.5px;height:10.03px;color:#d4ceff;background:#6a5acd;">$150</div>
<div class="cell col" style="left:518.5px;top:152.65px;width:38.5px;height:10.03px;color:#d4ceff;background:#6a5acd;">$73</div>
<div class="cell col" style="left:557px;top:152.65px;width:38.5px;height:10.03px;color:#d4ceff;background:#6a5acd;">$88</div>
<div class="cell col" style="left:595.5px;top:152.65px;width:38.5px;height:10.03px;color:#d4ceff;background:#6a5acd;">$198</div>
<div class="cell col" style="left:634px;top:152.65px;width:38.5px;height:10.03px;color:#9ef4ec;background:#20b2aa;">$1,243</div>
<div class="cell" style="left:364px;top:162.68px;width:39px;height:10.03px;color:#2a2a2a;">Expenses</div>
<div class="cell" style="left:403px;top:162.68px;width:38.5px;height:10.03px;color:#2a2a2a;"></div>
<div class="cell" style="left:441.5px;top:162.68px;width:38.5px;height:10.03px;color:#2a2a2a;"></div>
<div class="cell" style="left:480px;top:162.68px;width:38.5px;height:10.03px;color:#2a2a2a;"></div>
<div class="cell" style="left:518.5px;top:162.68px;width:38.5px;height:10.03px;color:#2a2a2a;"></div>
<div class="cell" style="left:557px;top:162.68px;width:38.5px;height:10.03px;color:#2a2a2a;"></div>
<div class="cell" style="left:595.5px;top:162.68px;width:38.5px;height:10.03px;color:#2a2a2a;"></div>
<div class="cell" style="left:634px;top:162.68px;width:38.5px;height:10.03px;color:#2a2a2a;"></div>
<div class="cell" style="left:364px;top:172.70999999999998px;width:39px;height:10.03px;color:#2a2a2a;">Accountant</div>
<div class="cell col" style="left:403px;top:172.70999999999998px;width:38.5px;height:10.03px;color:#a6f2a2;background:#048204;">$3.68</div>
<div class="cell col" style="left:441.5px;top:172.70999999999998px;width:38.5px;height:10.03px;color:#a6f2a2;background:#048204;">$10.08</div>
<div class="cell col" style="left:480px;top:172.70999999999998px;width:38.5px;height:10.03px;color:#a6f2a2;background:#048204;">$12.64</div>
<div class="cell col" style="left:518.5px;top:172.70999999999998px;width:38.5px;height:10.03px;color:#a6f2a2;background:#048204;">$12.16</div>
<div class="cell col" style="left:557px;top:172.70999999999998px;width:38.5px;height:10.03px;color:#a6f2a2;background:#048204;">$11.21</div>
<div class="cell col" style="left:595.5px;top:172.70999999999998px;width:38.5px;height:10.03px;color:#a6f2a2;background:#048204;">$4.95</div>
<div class="cell col" style="left:634px;top:172.70999999999998px;width:38.5px;height:10.03px;color:#9ef4ec;background:#20b2aa;">$55</div>
<div class="cell" style="left:364px;top:182.74px;width:39px;height:10.03px;color:#2a2a2a;">Advertising</div>
<div class="cell col" style="left:403px;top:182.74px;width:38.5px;height:10.03px;color:#a6f2a2;background:#048204;">$12.08</div>
<div class="cell col" style="left:441.5px;top:182.74px;width:38.5px;height:10.03px;color:#a6f2a2;background:#048204;">$3.68</div>
<div class="cell col" style="left:480px;top:182.74px;width:38.5px;height:10.03px;color:#a6f2a2;background:#048204;">$6.87</div>
<div class="cell col" style="left:518.5px;top:182.74px;width:38.5px;height:10.03px;color:#a6f2a2;background:#048204;">$8.04</div>
<div class="cell col" style="left:557px;top:182.74px;width:38.5px;height:10.03px;color:#a6f2a2;background:#048204;">$4.00</div>
<div class="cell col" style="left:595.5px;top:182.74px;width:38.5px;height:10.03px;color:#a6f2a2;background:#048204;">$4.77</div>
<div class="cell col" style="left:634px;top:182.74px;width:38.5px;height:10.03px;color:#9ef4ec;background:#20b2aa;">$39</div>
<div class="cell" style="left:364px;top:192.76999999999998px;width:39px;height:10.03px;color:#2a2a2a;">Bank fees</div>
<div class="cell col" style="left:403px;top:192.76999999999998px;width:38.5px;height:10.03px;color:#a6f2a2;background:#048204;">$11.94</div>
<div class="cell col" style="left:441.5px;top:192.76999999999998px;width:38.5px;height:10.03px;color:#a6f2a2;background:#048204;">$7.88</div>
<div class="cell col" style="left:480px;top:192.76999999999998px;width:38.5px;height:10.03px;color:#a6f2a2;background:#048204;">$5.70</div>
<div class="cell col" style="left:518.5px;top:192.76999999999998px;width:38.5px;height:10.03px;color:#a6f2a2;background:#048204;">$8.55</div>
<div class="cell col" style="left:557px;top:192.76999999999998px;width:38.5px;height:10.03px;color:#a6f2a2;background:#048204;">$11.61</div>
<div class="cell col" style="left:595.5px;top:192.76999999999998px;width:38.5px;height:10.03px;color:#a6f2a2;background:#048204;">$12.35</div>
<div class="cell col" style="left:634px;top:192.76999999999998px;width:38.5px;height:10.03px;color:#9ef4ec;background:#20b2aa;">$58</div>
<div class="cell" style="left:364px;top:202.8px;width:39px;height:10.03px;color:#2a2a2a;">Bank intere</div>
<div class="cell col" style="left:403px;top:202.8px;width:38.5px;height:10.03px;color:#a6f2a2;background:#048204;">$3.19</div>
<div class="cell col" style="left:441.5px;top:202.8px;width:38.5px;height:10.03px;color:#a6f2a2;background:#048204;">$11.44</div>
<div class="cell col" style="left:480px;top:202.8px;width:38.5px;height:10.03px;color:#a6f2a2;background:#048204;">$12.73</div>
<div class="cell col" style="left:518.5px;top:202.8px;width:38.5px;height:10.03px;color:#a6f2a2;background:#048204;">$11.05</div>
<div class="cell col" style="left:557px;top:202.8px;width:38.5px;height:10.03px;color:#a6f2a2;background:#048204;">$4.94</div>
<div class="cell col" style="left:595.5px;top:202.8px;width:38.5px;height:10.03px;color:#a6f2a2;background:#048204;">$6.77</div>
<div class="cell col" style="left:634px;top:202.8px;width:38.5px;height:10.03px;color:#9ef4ec;background:#20b2aa;">$50</div>
<div class="cell" style="left:364px;top:212.82999999999998px;width:39px;height:10.03px;color:#2a2a2a;">Credit card</div>
<div class="cell col" style="left:403px;top:212.82999999999998px;width:38.5px;height:10.03px;color:#a6f2a2;background:#048204;">$5.38</div>
<div class="cell col" style="left:441.5px;top:212.82999999999998px;width:38.5px;height:10.03px;color:#a6f2a2;background:#048204;">$10.00</div>
<div class="cell col" style="left:480px;top:212.82999999999998px;width:38.5px;height:10.03px;color:#a6f2a2;background:#048204;">$10.59</div>
<div class="cell col" style="left:518.5px;top:212.82999999999998px;width:38.5px;height:10.03px;color:#a6f2a2;background:#048204;">$11.34</div>
<div class="cell col" style="left:557px;top:212.82999999999998px;width:38.5px;height:10.03px;color:#a6f2a2;background:#048204;">$7.36</div>
<div class="cell col" style="left:595.5px;top:212.82999999999998px;width:38.5px;height:10.03px;color:#a6f2a2;background:#048204;">$11.14</div>
<div class="cell col" style="left:634px;top:212.82999999999998px;width:38.5px;height:10.03px;color:#9ef4ec;background:#20b2aa;">$56</div>
<div class="cell" style="left:364px;top:222.85999999999999px;width:39px;height:10.03px;color:#2a2a2a;">Utilities (el</div>
<div class="cell col" style="left:403px;top:222.85999999999999px;width:38.5px;height:10.03px;color:#a6f2a2;background:#048204;">$10.75</div>
<div class="cell col" style="left:441.5px;top:222.85999999999999px;width:38.5px;height:10.03px;color:#a6f2a2;background:#048204;">$8.32</div>
<div class="cell col" style="left:480px;top:222.85999999999999px;width:38.5px;height:10.03px;color:#a6f2a2;background:#048204;">$5.23</div>
<div class="cell col" style="left:518.5px;top:222.85999999999999px;width:38.5px;height:10.03px;color:#a6f2a2;background:#048204;">$11.24</div>
<div class="cell col" style="left:557px;top:222.85999999999999px;width:38.5px;height:10.03px;color:#a6f2a2;background:#048204;">$10.05</div>
<div class="cell col" style="left:595.5px;top:222.85999999999999px;width:38.5px;height:10.03px;color:#a6f2a2;background:#048204;">$12.07</div>
<div class="cell col" style="left:634px;top:222.85999999999999px;width:38.5px;height:10.03px;color:#9ef4ec;background:#20b2aa;">$58</div>
<div class="cell" style="left:364px;top:232.89px;width:39px;height:10.03px;color:#2a2a2a;">Telephone</div>
<div class="cell col" style="left:403px;top:232.89px;width:38.5px;height:10.03px;color:#a6f2a2;background:#048204;">$8.40</div>
<div class="cell col" style="left:441.5px;top:232.89px;width:38.5px;height:10.03px;color:#a6f2a2;background:#048204;">$12.96</div>
<div class="cell col" style="left:480px;top:232.89px;width:38.5px;height:10.03px;color:#a6f2a2;background:#048204;">$4.56</div>
<div class="cell col" style="left:518.5px;top:232.89px;width:38.5px;height:10.03px;color:#a6f2a2;background:#048204;">$3.67</div>
<div class="cell col" style="left:557px;top:232.89px;width:38.5px;height:10.03px;color:#a6f2a2;background:#048204;">$11.21</div>
<div class="cell col" style="left:595.5px;top:232.89px;width:38.5px;height:10.03px;color:#a6f2a2;background:#048204;">$12.29</div>
<div class="cell col" style="left:634px;top:232.89px;width:38.5px;height:10.03px;color:#9ef4ec;background:#20b2aa;">$53</div>
<div class="cell" style="left:364px;top:242.92px;width:39px;height:10.03px;color:#2a2a2a;">Lease/loan</div>
<div class="cell col" style="left:403px;top:242.92px;width:38.5px;height:10.03px;color:#a6f2a2;background:#048204;">$8.59</div>
<div class="cell col" style="left:441.5px;top:242.92px;width:38.5px;height:10.03px;color:#a6f2a2;background:#048204;">$8.19</div>
<div class="cell col" style="left:480px;top:242.92px;width:38.5px;height:10.03px;color:#a6f2a2;background:#048204;">$11.96</div>
<div class="cell col" style="left:518.5px;top:242.92px;width:38.5px;height:10.03px;color:#a6f2a2;background:#048204;">$6.85</div>
<div class="cell col" style="left:557px;top:242.92px;width:38.5px;height:10.03px;color:#a6f2a2;background:#048204;">$7.28</div>
<div class="cell col" style="left:595.5px;top:242.92px;width:38.5px;height:10.03px;color:#a6f2a2;background:#048204;">$4.08</div>
<div class="cell col" style="left:634px;top:242.92px;width:38.5px;height:10.03px;color:#9ef4ec;background:#20b2aa;">$47</div>
<div class="cell" style="left:364px;top:252.95px;width:39px;height:10.03px;color:#2a2a2a;">Rent & rate</div>
<div class="cell col" style="left:403px;top:252.95px;width:38.5px;height:10.03px;color:#a6f2a2;background:#048204;">$9.29</div>
<div class="cell col" style="left:441.5px;top:252.95px;width:38.5px;height:10.03px;color:#a6f2a2;background:#048204;">$6.48</div>
<div class="cell col" style="left:480px;top:252.95px;width:38.5px;height:10.03px;color:#a6f2a2;background:#048204;">$7.86</div>
<div class="cell col" style="left:518.5px;top:252.95px;width:38.5px;height:10.03px;color:#a6f2a2;background:#048204;">$4.38</div>
<div class="cell col" style="left:557px;top:252.95px;width:38.5px;height:10.03px;color:#a6f2a2;background:#048204;">$9.31</div>
<div class="cell col" style="left:595.5px;top:252.95px;width:38.5px;height:10.03px;color:#a6f2a2;background:#048204;">$10.11</div>
<div class="cell col" style="left:634px;top:252.95px;width:38.5px;height:10.03px;color:#9ef4ec;background:#20b2aa;">$47</div>
<div class="cell" style="left:364px;top:262.98px;width:39px;height:10.03px;color:#2a2a2a;">Motor vehic</div>
<div class="cell col" style="left:403px;top:262.98px;width:38.5px;height:10.03px;color:#a6f2a2;background:#048204;">$12.93</div>
<div class="cell col" style="left:441.5px;top:262.98px;width:38.5px;height:10.03px;color:#a6f2a2;background:#048204;">$8.22</div>
<div class="cell col" style="left:480px;top:262.98px;width:38.5px;height:10.03px;color:#a6f2a2;background:#048204;">$5.39</div>
<div class="cell col" style="left:518.5px;top:262.98px;width:38.5px;height:10.03px;color:#a6f2a2;background:#048204;">$7.62</div>
<div class="cell col" style="left:557px;top:262.98px;width:38.5px;height:10.03px;color:#a6f2a2;background:#048204;">$8.26</div>
<div class="cell col" style="left:595.5px;top:262.98px;width:38.5px;height:10.03px;color:#a6f2a2;background:#048204;">$3.25</div>
<div class="cell col" style="left:634px;top:262.98px;width:38.5px;height:10.03px;color:#9ef4ec;background:#20b2aa;">$46</div>
<div class="cell" style="left:364px;top:273.01px;width:39px;height:10.03px;color:#2a2a2a;">Repairs &</div>
<div class="cell col" style="left:403px;top:273.01px;width:38.5px;height:10.03px;color:#a6f2a2;background:#048204;">$10.21</div>
<div class="cell col" style="left:441.5px;top:273.01px;width:38.5px;height:10.03px;color:#a6f2a2;background:#048204;">$5.46</div>
<div class="cell col" style="left:480px;top:273.01px;width:38.5px;height:10.03px;color:#a6f2a2;background:#048204;">$10.27</div>
<div class="cell col" style="left:518.5px;top:273.01px;width:38.5px;height:10.03px;color:#a6f2a2;background:#048204;">$8.72</div>
<div class="cell col" style="left:557px;top:273.01px;width:38.5px;height:10.03px;color:#a6f2a2;background:#048204;">$8.07</div>
<div class="cell col" style="left:595.5px;top:273.01px;width:38.5px;height:10.03px;color:#a6f2a2;background:#048204;">$9.46</div>
<div class="cell col" style="left:634px;top:273.01px;width:38.5px;height:10.03px;color:#9ef4ec;background:#20b2aa;">$52</div>
<div class="cell" style="left:364px;top:283.03999999999996px;width:39px;height:10.03px;color:#2a2a2a;">Stationery</div>
<div class="cell col" style="left:403px;top:283.03999999999996px;width:38.5px;height:10.03px;color:#a6f2a2;background:#048204;">$3.25</div>
<div class="cell col" style="left:441.5px;top:283.03999999999996px;width:38.5px;height:10.03px;color:#a6f2a2;background:#048204;">$7.03</div>
<div class="cell col" style="left:480px;top:283.03999999999996px;width:38.5px;height:10.03px;color:#a6f2a2;background:#048204;">$9.84</div>
<div class="cell col" style="left:518.5px;top:283.03999999999996px;width:38.5px;height:10.03px;color:#a6f2a2;background:#048204;">$3.07</div>
<div class="cell col" style="left:557px;top:283.03999999999996px;width:38.5px;height:10.03px;color:#a6f2a2;background:#048204;">$8.68</div>
<div class="cell col" style="left:595.5px;top:283.03999999999996px;width:38.5px;height:10.03px;color:#a6f2a2;background:#048204;">$4.91</div>
<div class="cell col" style="left:634px;top:283.03999999999996px;width:38.5px;height:10.03px;color:#9ef4ec;background:#20b2aa;">$37</div>
<div class="cell" style="left:364px;top:293.07px;width:39px;height:10.03px;color:#2a2a2a;">Insurance</div>
<div class="cell col" style="left:403px;top:293.07px;width:38.5px;height:10.03px;color:#a6f2a2;background:#048204;">$4.57</div>
<div class="cell col" style="left:441.5px;top:293.07px;width:38.5px;height:10.03px;color:#a6f2a2;background:#048204;">$5.68</div>
<div class="cell col" style="left:480px;top:293.07px;width:38.5px;height:10.03px;color:#a6f2a2;background:#048204;">$10.39</div>
<div class="cell col" style="left:518.5px;top:293.07px;width:38.5px;height:10.03px;color:#a6f2a2;background:#048204;">$7.46</div>
<div class="cell col" style="left:557px;top:293.07px;width:38.5px;height:10.03px;color:#a6f2a2;background:#048204;">$11.73</div>
<div class="cell col" style="left:595.5px;top:293.07px;width:38.5px;height:10.03px;color:#a6f2a2;background:#048204;">$10.44</div>
<div class="cell col" style="left:634px;top:293.07px;width:38.5px;height:10.03px;color:#9ef4ec;background:#20b2aa;">$50</div>
<div class="cell" style="left:364px;top:303.1px;width:39px;height:2.099999999999966px;color:#333;border-bottom:none;"></div>
<div class="cell col" style="left:403px;top:303.1px;width:38.5px;height:2.099999999999966px;color:#a6f2a2;border-bottom:none;background:#048204;"></div>
<div class="cell col" style="left:441.5px;top:303.1px;width:38.5px;height:2.099999999999966px;color:#a6f2a2;border-bottom:none;background:#048204;"></div>
<div class="cell col" style="left:480px;top:303.1px;width:38.5px;height:2.099999999999966px;color:#a6f2a2;border-bottom:none;background:#048204;"></div>
<div class="cell col" style="left:518.5px;top:303.1px;width:38.5px;height:2.099999999999966px;color:#a6f2a2;border-bottom:none;background:#048204;"></div>
<div class="cell col" style="left:557px;top:303.1px;width:38.5px;height:2.099999999999966px;color:#a6f2a2;border-bottom:none;background:#048204;"></div>
<div class="cell col" style="left:595.5px;top:303.1px;width:38.5px;height:2.099999999999966px;color:#a6f2a2;border-bottom:none;background:#048204;"></div>
<div class="cell col" style="left:634px;top:303.1px;width:38.5px;height:2.099999999999966px;color:#9ef4ec;border-bottom:none;background:#20b2aa;"></div>
<div style="left:687.5px;top:89.3px;width:1.5px;height:215.7px;background:#eef2f8"></div>
<div style="left:689px;top:89.3px;width:10.3px;height:215.7px;background:linear-gradient(90deg,#9ab0d6,#a9bde0)"></div>
<div style="left:689px;top:89.3px;width:10.3px;height:11px;background:linear-gradient(#b3c5e2,#93aad2);border:1px solid #8299c2"></div>
<svg style="left:692.2px;top:93.89999999999999px" width="4" height="2.6" viewBox="0 0 4 2.6"><path d="M0 2.6L2 0L4 2.6z" fill="#34466e"/></svg>
<div style="left:689.3px;top:100.3px;width:9.7px;height:133.7px;background:linear-gradient(90deg,#fafbfd,#e8edf4);border:1px solid #c6d1e2"></div>
<div style="left:691.7px;top:166px;width:5px;height:3px;border-top:1px solid #9aa8c0;border-bottom:1px solid #9aa8c0"></div>
<svg style="left:692.2px;top:298.5px" width="4" height="3" viewBox="0 0 4 3"><path d="M0 0L2 3L4 0z" fill="#4a6aa8"/></svg>
<div style="left:672.5px;top:89.3px;width:16.5px;height:215.7px;background:#f2f2f2"></div>
<div style="left:1px;top:305px;width:340px;height:10.3px;background:linear-gradient(#bccde6,#a9bfdf)"></div>
<div style="left:1px;top:305px;width:40px;height:10.3px;background:linear-gradient(#f1f4f9,#dfe6f0);border-right:1px solid #cdd5e0"></div>
<div style="left:4px;top:308.5px;width:0.8px;height:4px;background:#b8c0cc"></div>
<svg style="left:5px;top:308.5px" width="3" height="4" viewBox="0 0 3 4"><path d="M3 0L0 2L3 4z" fill="#b8c0cc"/></svg>
<svg style="left:15px;top:308.5px" width="3" height="4" viewBox="0 0 3 4"><path d="M3 0L0 2L3 4z" fill="#b8c0cc"/></svg>
<svg style="left:25px;top:308.5px" width="3" height="4" viewBox="0 0 3 4"><path d="M0 0L3 2L0 4z" fill="#b8c0cc"/></svg>
<div style="left:37px;top:308.5px;width:0.8px;height:4px;background:#b8c0cc"></div>
<svg style="left:35px;top:308.5px" width="3" height="4" viewBox="0 0 3 4"><path d="M0 0L3 2L0 4z" fill="#b8c0cc"/></svg>
<svg style="left:41px;top:305px" width="57" height="11" viewBox="0 0 57 11"><path d="M0 0H56L48.5 10.3H0z" fill="#f7f9fc"/><path d="M56 0L48.5 10.3" stroke="#9fb3cf" stroke-width="0.8"/></svg>
<div class="t" style="left:47.00px;top:308px;font-size:7px;color:#2c3c66;letter-spacing:-0.101px;font-weight:bold">Profit_Loss</div>
<div style="left:276px;top:305px;width:54px;height:10.3px;background:linear-gradient(#f4f6f9,#dde3ec);border:1px solid #b8c2d2"></div>
<svg style="left:279.5px;top:307.5px" width="3" height="5" viewBox="0 0 3 5"><path d="M3 0L0 2.5L3 5z" fill="#333c50"/></svg>
<svg style="left:323.5px;top:307.5px" width="3" height="5" viewBox="0 0 3 5"><path d="M0 0L3 2.5L0 5z" fill="#333c50"/></svg>
<div style="left:286px;top:305px;width:34px;height:10.3px;border-left:1px solid #c0c8d6;border-right:1px solid #c0c8d6"></div>
<div style="left:301.0px;top:308.5px;width:4px;height:3.5px;border-left:1px solid #a8b2c4;border-right:1px solid #a8b2c4"></div>
<div style="left:330px;top:305px;width:11px;height:10.3px;background:#a9bfdf"></div>
<div style="left:343px;top:305px;width:346px;height:10.3px;background:linear-gradient(#bccde6,#a9bfdf)"></div>
<div style="left:343px;top:305px;width:40px;height:10.3px;background:linear-gradient(#f1f4f9,#dfe6f0);border-right:1px solid #cdd5e0"></div>
<div style="left:346px;top:308.5px;width:0.8px;height:4px;background:#b8c0cc"></div>
<svg style="left:347px;top:308.5px" width="3" height="4" viewBox="0 0 3 4"><path d="M3 0L0 2L3 4z" fill="#b8c0cc"/></svg>
<svg style="left:357px;top:308.5px" width="3" height="4" viewBox="0 0 3 4"><path d="M3 0L0 2L3 4z" fill="#b8c0cc"/></svg>
<svg style="left:367px;top:308.5px" width="3" height="4" viewBox="0 0 3 4"><path d="M0 0L3 2L0 4z" fill="#b8c0cc"/></svg>
<div style="left:379px;top:308.5px;width:0.8px;height:4px;background:#b8c0cc"></div>
<svg style="left:377px;top:308.5px" width="3" height="4" viewBox="0 0 3 4"><path d="M0 0L3 2L0 4z" fill="#b8c0cc"/></svg>
<svg style="left:383px;top:305px" width="57" height="11" viewBox="0 0 57 11"><path d="M0 0H56L48.5 10.3H0z" fill="#f7f9fc"/><path d="M56 0L48.5 10.3" stroke="#9fb3cf" stroke-width="0.8"/></svg>
<div class="t" style="left:389.00px;top:308px;font-size:7px;color:#2c3c66;letter-spacing:-0.101px;font-weight:bold">Profit_Loss</div>
<div style="left:633px;top:305px;width:56px;height:10.3px;background:linear-gradient(#f4f6f9,#dde3ec);border:1px solid #b8c2d2"></div>
<svg style="left:636.5px;top:307.5px" width="3" height="5" viewBox="0 0 3 5"><path d="M3 0L0 2.5L3 5z" fill="#333c50"/></svg>
<svg style="left:682.5px;top:307.5px" width="3" height="5" viewBox="0 0 3 5"><path d="M0 0L3 2.5L0 5z" fill="#333c50"/></svg>
<div style="left:643px;top:305px;width:36px;height:10.3px;border-left:1px solid #c0c8d6;border-right:1px solid #c0c8d6"></div>
<div style="left:659.0px;top:308.5px;width:4px;height:3.5px;border-left:1px solid #a8b2c4;border-right:1px solid #a8b2c4"></div>
<div style="left:689px;top:305px;width:10px;height:10.3px;background:#a9bfdf"></div>
<div style="left:1px;top:315.3px;width:698px;height:141px;background:#e3e3e3"></div>
<div style="left:3px;top:319.3px;width:134px;height:136.5px;background:#fff;border:1px solid #5c5c5c"></div>
<div style="left:4px;top:331.8px;width:111px;height:1px;background:#dcdcdc"></div>
<div style="left:30.6px;top:320.3px;width:1px;height:11.5px;background:#ececec"></div>
<div class="t" style="left:8.00px;top:324px;font-size:6.6px;color:#333;letter-spacing:-0.230px">Enable</div>
<div class="t" style="left:34.90px;top:324px;font-size:6.6px;color:#333;letter-spacing:-0.249px">Option</div>
<div style="left:4px;top:332.20px;width:111px;height:13.07px;border-bottom:1px solid #e2e2e2"></div>
<div style="left:4.5px;top:332.20px;width:26.2px;height:12.00px;background:#1e74cf"></div>
<div style="left:30.8px;top:332.20px;width:84.2px;height:12.00px;background:#fff"></div>
<div class="t" style="left:33.40px;top:337px;font-size:6.6px;color:#1a1a1a;letter-spacing:-0.216px">Select All</div>
<div style="left:13.8px;top:335.30px;width:7.3px;height:6.4px;background:#fff"></div>
<div style="left:4px;top:345.27px;width:111px;height:13.07px;border-bottom:1px solid #e2e2e2"></div>
<div style="left:4.5px;top:345.27px;width:26.2px;height:12.00px;background:#fff"></div>
<div style="left:30.8px;top:345.27px;width:84.2px;height:12.00px;background:#0a820a"></div>
<div class="t" style="left:33.40px;top:350px;font-size:6.6px;color:#96ec88;letter-spacing:-0.216px">Entered Values</div>
<div style="left:13.3px;top:347.57px;width:8px;height:8.00px;border:1px solid #707070;background:#fff"></div>
<svg style="left:14.6px;top:349.17px" width="5.5" height="5" viewBox="0 0 5.5 5"><path d="M0.4 2.4L2 4.1L5.1 0.6" stroke="#4a4a4a" stroke-width="0.85" fill="none"/></svg>
<div style="left:4px;top:358.34px;width:111px;height:13.07px;border-bottom:1px solid #e2e2e2"></div>
<div style="left:4.5px;top:358.34px;width:26.2px;height:12.00px;background:#fff"></div>
<div style="left:30.8px;top:358.34px;width:84.2px;height:12.00px;background:#21aea6"></div>
<div class="t" style="left:33.40px;top:363px;font-size:6.6px;color:#c8f6f2;letter-spacing:-0.216px">Calculated Values</div>
<div style="left:13.3px;top:360.64px;width:8px;height:8.00px;border:1px solid #707070;background:#fff"></div>
<svg style="left:14.6px;top:362.24px" width="5.5" height="5" viewBox="0 0 5.5 5"><path d="M0.4 2.4L2 4.1L5.1 0.6" stroke="#4a4a4a" stroke-width="0.85" fill="none"/></svg>
<div style="left:4px;top:371.41px;width:111px;height:13.07px;border-bottom:1px solid #e2e2e2"></div>
<div style="left:4.5px;top:371.41px;width:26.2px;height:12.00px;background:#fff"></div>
<div style="left:30.8px;top:371.41px;width:84.2px;height:12.00px;background:#6a5ac9"></div>
<div class="t" style="left:33.40px;top:376px;font-size:6.6px;color:#ded8ff;letter-spacing:-0.216px">Formulas</div>
<div style="left:13.3px;top:373.71px;width:8px;height:8.00px;border:1px solid #707070;background:#fff"></div>
<svg style="left:14.6px;top:375.31px" width="5.5" height="5" viewBox="0 0 5.5 5"><path d="M0.4 2.4L2 4.1L5.1 0.6" stroke="#4a4a4a" stroke-width="0.85" fill="none"/></svg>
<div style="left:4px;top:384.48px;width:111px;height:13.07px;border-bottom:1px solid #e2e2e2"></div>
<div style="left:4.5px;top:384.48px;width:26.2px;height:12.00px;background:#fff"></div>
<div style="left:30.8px;top:384.48px;width:84.2px;height:12.00px;background:#4169dc"></div>
<div class="t" style="left:33.40px;top:389px;font-size:6.6px;color:#d8e4ff;letter-spacing:-0.216px">SysGen Formulas</div>
<div style="left:13.3px;top:386.78px;width:8px;height:8.00px;border:1px solid #707070;background:#fff"></div>
<div style="left:4px;top:397.55px;width:111px;height:13.07px;border-bottom:1px solid #e2e2e2"></div>
<div style="left:4.5px;top:397.55px;width:26.2px;height:12.00px;background:#fff"></div>
<div style="left:30.8px;top:397.55px;width:84.2px;height:12.00px;background:#88cdea"></div>
<div class="t" style="left:33.40px;top:402px;font-size:6.6px;color:#123048;letter-spacing:-0.216px">SysGen Formulas Errors</div>
<div style="left:13.3px;top:399.85px;width:8px;height:8.00px;border:1px solid #707070;background:#fff"></div>
<div style="left:4px;top:410.62px;width:111px;height:13.07px;border-bottom:1px solid #e2e2e2"></div>
<div style="left:4.5px;top:410.62px;width:26.2px;height:12.00px;background:#fff"></div>
<div style="left:30.8px;top:410.62px;width:84.2px;height:12.00px;background:#fb0000"></div>
<div class="t" style="left:33.40px;top:415px;font-size:6.6px;color:#7a0000;letter-spacing:-0.216px">Structural</div>
<div style="left:13.3px;top:412.92px;width:8px;height:8.00px;border:1px solid #707070;background:#fff"></div>
<svg style="left:14.6px;top:414.52px" width="5.5" height="5" viewBox="0 0 5.5 5"><path d="M0.4 2.4L2 4.1L5.1 0.6" stroke="#4a4a4a" stroke-width="0.85" fill="none"/></svg>
<div style="left:4px;top:423.69px;width:111px;height:13.07px;border-bottom:1px solid #e2e2e2"></div>
<div style="left:4.5px;top:423.69px;width:26.2px;height:12.00px;background:#fff"></div>
<div style="left:30.8px;top:423.69px;width:84.2px;height:12.00px;background:#bdb66c"></div>
<div class="t" style="left:33.40px;top:428px;font-size:6.6px;color:#262600;letter-spacing:-0.216px">Names</div>
<div style="left:13.3px;top:425.99px;width:8px;height:8.00px;border:1px solid #707070;background:#fff"></div>
<svg style="left:14.6px;top:427.59px" width="5.5" height="5" viewBox="0 0 5.5 5"><path d="M0.4 2.4L2 4.1L5.1 0.6" stroke="#4a4a4a" stroke-width="0.85" fill="none"/></svg>
<div style="left:4px;top:436.76px;width:111px;height:13.07px;border-bottom:1px solid #e2e2e2"></div>
<div style="left:4.5px;top:436.76px;width:26.2px;height:12.00px;background:#fff"></div>
<div style="left:30.8px;top:436.76px;width:84.2px;height:12.00px;background:#f98272"></div>
<div class="t" style="left:33.40px;top:441px;font-size:6.6px;color:#8a1212;letter-spacing:-0.216px">SysGen Names</div>
<div style="left:13.3px;top:439.06px;width:8px;height:8.00px;border:1px solid #707070;background:#fff"></div>
<div style="left:4px;top:449.83px;width:111px;height:5.67px;border-bottom:1px solid #e2e2e2"></div>
<div style="left:4.5px;top:449.83px;width:26.2px;height:5.67px;background:#fff"></div>
<div style="left:30.8px;top:449.83px;width:84.2px;height:5.67px;background:#f5901c"></div>
<div style="left:30.8px;top:449.83px;width:84.2px;height:5.67px;overflow:hidden">
<div class="t" style="left:2.6px;top:4.17px;font-size:6.6px;letter-spacing:-0.216px;color:#6a2a00">SysGen Names Errors</div></div>
<div style="left:13.3px;top:452.13px;width:8px;height:3.17px;border:1px solid #707070;border-bottom:none;background:#fff"></div>
<div style="left:115px;top:320.3px;width:11px;height:135px;background:#a9a9a9"></div>
<div style="left:126px;top:320.3px;width:10px;height:135px;background:#f0f0f0"></div>
<div style="left:126px;top:329.2px;width:10px;height:72px;background:#cdcdcd"></div>
<svg style="left:128px;top:322.8px" width="6" height="4" viewBox="0 0 6 4"><path d="M0.5 3.5L3 1L5.5 3.5" stroke="#555" stroke-width="1" fill="none"/></svg>
<svg style="left:128px;top:447.5px" width="6" height="4" viewBox="0 0 6 4"><path d="M0.5 0.5L3 3L5.5 0.5" stroke="#555" stroke-width="1" fill="none"/></svg>
<div style="left:138.6px;top:319px;width:378px;height:136.8px;background:#fff;border:1px solid #c2c2c2;border-bottom:1px solid #6a6a6a"></div>
<div class="t" style="left:143.70px;top:325px;font-size:6.6px;color:#333;letter-spacing:-0.312px">Sheet</div>
<div class="t" style="left:206.90px;top:325px;font-size:6.6px;color:#333;letter-spacing:-0.457px">Cell</div>
<div class="t" style="left:242.90px;top:325px;font-size:6.6px;color:#333;letter-spacing:-0.316px">Value 1</div>
<div class="t" style="left:299.30px;top:325px;font-size:6.6px;color:#333;letter-spacing:-0.200px">Value 2</div>
<div class="t" style="left:354.40px;top:325px;font-size:6.6px;color:#333;letter-spacing:-0.192px">Change Description</div>
<div style="left:203.6px;top:320.3px;width:1px;height:135px;background:#f1f1f1"></div>
<div style="left:238px;top:320.3px;width:1px;height:135px;background:#f1f1f1"></div>
<div style="left:295px;top:320.3px;width:1px;height:135px;background:#f1f1f1"></div>
<div style="left:351px;top:320.3px;width:1px;height:135px;background:#f1f1f1"></div>
<div style="left:140px;top:344.70px;width:364.5px;height:1px;background:#f6f6f6"></div>
<div class="t" style="left:143.90px;top:337px;font-size:6.6px;color:#8884b4;letter-spacing:-0.318px">Profit &amp; Loss</div>
<div class="t" style="left:206.90px;top:337px;font-size:6.6px;color:#8884b4;letter-spacing:-0.318px">B6</div>
<div style="left:238.5px;top:333.50px;width:56.5px;height:10px;overflow:hidden">
<div class="t" style="left:4.40px;top:3px;font-size:6.6px;color:#8884b4;letter-spacing:-0.318px">=B3-B4-B5</div>
</div>
<div style="left:295.5px;top:333.50px;width:55.5px;height:10px;overflow:hidden">
<div class="t" style="left:3.80px;top:3px;font-size:6.6px;color:#8884b4;letter-spacing:-0.318px">=SUM(B3:B4)</div>
</div>
<div class="t" style="left:354.40px;top:337px;font-size:6.6px;color:#8884b4;letter-spacing:-0.271px">Formula Changed.</div>
<div style="left:140px;top:354.75px;width:364.5px;height:1px;background:#f6f6f6"></div>
<div class="t" style="left:143.90px;top:347px;font-size:6.6px;color:#8884b4;letter-spacing:-0.318px">Profit &amp; Loss</div>
<div class="t" style="left:206.90px;top:347px;font-size:6.6px;color:#8884b4;letter-spacing:-0.318px">C6</div>
<div style="left:238.5px;top:343.55px;width:56.5px;height:10px;overflow:hidden">
<div class="t" style="left:4.40px;top:3px;font-size:6.6px;color:#8884b4;letter-spacing:-0.318px">=C3-C4-C5</div>
</div>
<div style="left:295.5px;top:343.55px;width:55.5px;height:10px;overflow:hidden">
<div class="t" style="left:3.80px;top:3px;font-size:6.6px;color:#8884b4;letter-spacing:-0.318px">=SUM(C3:C4)</div>
</div>
<div class="t" style="left:354.40px;top:347px;font-size:6.6px;color:#8884b4;letter-spacing:-0.271px">Formula Changed.</div>
<div style="left:140px;top:364.80px;width:364.5px;height:1px;background:#f6f6f6"></div>
<div class="t" style="left:143.90px;top:357px;font-size:6.6px;color:#8884b4;letter-spacing:-0.318px">Profit &amp; Loss</div>
<div class="t" style="left:206.90px;top:357px;font-size:6.6px;color:#8884b4;letter-spacing:-0.318px">D6</div>
<div style="left:238.5px;top:353.60px;width:56.5px;height:10px;overflow:hidden">
<div class="t" style="left:4.40px;top:3px;font-size:6.6px;color:#8884b4;letter-spacing:-0.318px">=D3-D4-D5</div>
</div>
<div style="left:295.5px;top:353.60px;width:55.5px;height:10px;overflow:hidden">
<div class="t" style="left:3.80px;top:3px;font-size:6.6px;color:#8884b4;letter-spacing:-0.318px">=SUM(D3:D4)</div>
</div>
<div class="t" style="left:354.40px;top:357px;font-size:6.6px;color:#8884b4;letter-spacing:-0.271px">Formula Changed.</div>
<div style="left:140px;top:374.85px;width:364.5px;height:1px;background:#f6f6f6"></div>
<div class="t" style="left:143.90px;top:367px;font-size:6.6px;color:#8884b4;letter-spacing:-0.318px">Profit &amp; Loss</div>
<div class="t" style="left:206.90px;top:367px;font-size:6.6px;color:#8884b4;letter-spacing:-0.318px">E6</div>
<div style="left:238.5px;top:363.65px;width:56.5px;height:10px;overflow:hidden">
<div class="t" style="left:4.40px;top:3px;font-size:6.6px;color:#8884b4;letter-spacing:-0.318px">=E3-E4-E5</div>
</div>
<div style="left:295.5px;top:363.65px;width:55.5px;height:10px;overflow:hidden">
<div class="t" style="left:3.80px;top:3px;font-size:6.6px;color:#8884b4;letter-spacing:-0.318px">=SUM(E3:E4)</div>
</div>
<div class="t" style="left:354.40px;top:367px;font-size:6.6px;color:#8884b4;letter-spacing:-0.271px">Formula Changed.</div>
<div style="left:140px;top:384.90px;width:364.5px;height:1px;background:#f6f6f6"></div>
<div class="t" style="left:143.90px;top:377px;font-size:6.6px;color:#8884b4;letter-spacing:-0.318px">Profit &amp; Loss</div>
<div class="t" style="left:206.90px;top:377px;font-size:6.6px;color:#8884b4;letter-spacing:-0.318px">F6</div>
<div style="left:238.5px;top:373.70px;width:56.5px;height:10px;overflow:hidden">
<div class="t" style="left:4.40px;top:3px;font-size:6.6px;color:#8884b4;letter-spacing:-0.318px">=F3-F4-F5</div>
</div>
<div style="left:295.5px;top:373.70px;width:55.5px;height:10px;overflow:hidden">
<div class="t" style="left:3.80px;top:3px;font-size:6.6px;color:#8884b4;letter-spacing:-0.318px">=SUM(F3:F4)</div>
</div>
<div class="t" style="left:354.40px;top:377px;font-size:6.6px;color:#8884b4;letter-spacing:-0.271px">Formula Changed.</div>
<div style="left:140px;top:394.95px;width:364.5px;height:1px;background:#f6f6f6"></div>
<div class="t" style="left:143.90px;top:387px;font-size:6.6px;color:#8884b4;letter-spacing:-0.318px">Profit &amp; Loss</div>
<div class="t" style="left:206.90px;top:387px;font-size:6.6px;color:#8884b4;letter-spacing:-0.318px">G6</div>
<div style="left:238.5px;top:383.75px;width:56.5px;height:10px;overflow:hidden">
<div class="t" style="left:4.40px;top:3px;font-size:6.6px;color:#8884b4;letter-spacing:-0.318px">=G3-G4-G5</div>
</div>
<div style="left:295.5px;top:383.75px;width:55.5px;height:10px;overflow:hidden">
<div class="t" style="left:3.80px;top:3px;font-size:6.6px;color:#8884b4;letter-spacing:-0.318px">=SUM(G3:G4)</div>
</div>
<div class="t" style="left:354.40px;top:387px;font-size:6.6px;color:#8884b4;letter-spacing:-0.271px">Formula Changed.</div>
<div style="left:140px;top:405.00px;width:364.5px;height:1px;background:#f6f6f6"></div>
<div class="t" style="left:143.90px;top:397px;font-size:6.6px;color:#45a045;letter-spacing:-0.318px">Profit &amp; Loss</div>
<div class="t" style="left:206.90px;top:397px;font-size:6.6px;color:#45a045;letter-spacing:-0.318px">A1</div>
<div style="left:238.5px;top:393.80px;width:56.5px;height:10px;overflow:hidden">
<div class="t" style="left:4.40px;top:3px;font-size:6.6px;color:#45a045;letter-spacing:-0.318px">Profit &amp; Loss for...</div>
</div>
<div style="left:295.5px;top:393.80px;width:55.5px;height:10px;overflow:hidden">
<div class="t" style="left:3.80px;top:3px;font-size:6.6px;color:#45a045;letter-spacing:-0.318px">Profit &amp; Loss for...</div>
</div>
<div class="t" style="left:354.40px;top:397px;font-size:6.6px;color:#45a045;letter-spacing:-0.271px">Entered Value Changed.</div>
<div style="left:140px;top:415.05px;width:364.5px;height:1px;background:#f6f6f6"></div>
<div class="t" style="left:143.90px;top:407px;font-size:6.6px;color:#45a045;letter-spacing:-0.318px">Profit &amp; Loss</div>
<div class="t" style="left:206.90px;top:407px;font-size:6.6px;color:#45a045;letter-spacing:-0.318px">B3</div>
<div style="left:238.5px;top:403.85px;width:56.5px;height:10px;overflow:hidden">
<div class="t" style="left:4.40px;top:3px;font-size:6.6px;color:#45a045;letter-spacing:-0.318px">$177 (177)</div>
</div>
<div style="left:295.5px;top:403.85px;width:55.5px;height:10px;overflow:hidden">
<div class="t" style="left:3.80px;top:3px;font-size:6.6px;color:#45a045;letter-spacing:-0.318px">$367 (367)</div>
</div>
<div class="t" style="left:354.40px;top:407px;font-size:6.6px;color:#45a045;letter-spacing:-0.271px">Entered Value Changed.</div>
<div style="left:140px;top:425.10px;width:364.5px;height:1px;background:#f6f6f6"></div>
<div class="t" style="left:143.90px;top:417px;font-size:6.6px;color:#45a045;letter-spacing:-0.318px">Profit &amp; Loss</div>
<div class="t" style="left:206.90px;top:417px;font-size:6.6px;color:#45a045;letter-spacing:-0.318px">B4</div>
<div style="left:238.5px;top:413.90px;width:56.5px;height:10px;overflow:hidden">
<div class="t" style="left:4.40px;top:3px;font-size:6.6px;color:#45a045;letter-spacing:-0.318px">$5 (5)</div>
</div>
<div style="left:295.5px;top:413.90px;width:55.5px;height:10px;overflow:hidden">
<div class="t" style="left:3.80px;top:3px;font-size:6.6px;color:#45a045;letter-spacing:-0.318px">$10 (10)</div>
</div>
<div class="t" style="left:354.40px;top:417px;font-size:6.6px;color:#45a045;letter-spacing:-0.271px">Entered Value Changed.</div>
<div style="left:140px;top:435.15px;width:364.5px;height:1px;background:#f6f6f6"></div>
<div class="t" style="left:143.90px;top:427px;font-size:6.6px;color:#45a045;letter-spacing:-0.318px">Profit &amp; Loss</div>
<div class="t" style="left:206.90px;top:427px;font-size:6.6px;color:#45a045;letter-spacing:-0.318px">B8</div>
<div style="left:238.5px;top:423.95px;width:56.5px;height:10px;overflow:hidden">
<div class="t" style="left:4.40px;top:3px;font-size:6.6px;color:#45a045;letter-spacing:-0.318px">$5.78 (5.78225...</div>
</div>
<div style="left:295.5px;top:423.95px;width:55.5px;height:10px;overflow:hidden">
<div class="t" style="left:3.80px;top:3px;font-size:6.6px;color:#45a045;letter-spacing:-0.318px">$3.68 (3.68392...</div>
</div>
<div class="t" style="left:354.40px;top:427px;font-size:6.6px;color:#45a045;letter-spacing:-0.271px">Entered Value Changed.</div>
<div style="left:140px;top:445.20px;width:364.5px;height:1px;background:#f6f6f6"></div>
<div class="t" style="left:143.90px;top:437px;font-size:6.6px;color:#45a045;letter-spacing:-0.318px">Profit &amp; Loss</div>
<div class="t" style="left:206.90px;top:437px;font-size:6.6px;color:#45a045;letter-spacing:-0.318px">B9</div>
<div style="left:238.5px;top:434.00px;width:56.5px;height:10px;overflow:hidden">
<div class="t" style="left:4.40px;top:3px;font-size:6.6px;color:#45a045;letter-spacing:-0.318px">$10.72 (10.724...</div>
</div>
<div style="left:295.5px;top:434.00px;width:55.5px;height:10px;overflow:hidden">
<div class="t" style="left:3.80px;top:3px;font-size:6.6px;color:#45a045;letter-spacing:-0.318px">$12.08 (12.078...</div>
</div>
<div class="t" style="left:354.40px;top:437px;font-size:6.6px;color:#45a045;letter-spacing:-0.271px">Entered Value Changed.</div>
<div style="left:140px;top:455.25px;width:364.5px;height:1px;background:#f6f6f6"></div>
<div class="t" style="left:143.90px;top:447px;font-size:6.6px;color:#45a045;letter-spacing:-0.318px">Profit &amp; Loss</div>
<div class="t" style="left:206.90px;top:447px;font-size:6.6px;color:#45a045;letter-spacing:-0.318px">B10</div>
<div style="left:238.5px;top:444.05px;width:56.5px;height:10px;overflow:hidden">
<div class="t" style="left:4.40px;top:3px;font-size:6.6px;color:#45a045;letter-spacing:-0.318px">$8.40 (8.40486...</div>
</div>
<div style="left:295.5px;top:444.05px;width:55.5px;height:10px;overflow:hidden">
<div class="t" style="left:3.80px;top:3px;font-size:6.6px;color:#45a045;letter-spacing:-0.318px">$11.94 (11.936...</div>
</div>
<div class="t" style="left:354.40px;top:447px;font-size:6.6px;color:#45a045;letter-spacing:-0.271px">Entered Value Changed.</div>
<div style="left:504.7px;top:320.3px;width:10px;height:135px;background:#f0f0f0"></div>
<div style="left:505px;top:330.4px;width:9.3px;height:9.3px;background:#cdcdcd"></div>
<svg style="left:506.7px;top:322.8px" width="6" height="4" viewBox="0 0 6 4"><path d="M0.5 3.5L3 1L5.5 3.5" stroke="#555" stroke-width="1" fill="none"/></svg>
<svg style="left:506.7px;top:447.5px" width="6" height="4" viewBox="0 0 6 4"><path d="M0.5 0.5L3 3L5.5 0.5" stroke="#555" stroke-width="1" fill="none"/></svg>
<div style="left:515px;top:319.5px;width:3.5px;height:135.8px;background:#a9a9a9"></div>
<div style="left:518.5px;top:319px;width:180.5px;height:136.8px;background:#fff;border:1px solid #5c5c5c;border-left:none;border-right:1px solid #8a8a8a"></div>
<div class="t" style="left:523.3px;width:27.5px;text-align:right;top:377.70px;font-size:6.2px;color:#555">0</div>
<div style="left:553.3px;top:371.45px;width:140px;height:1px;background:#efefef"></div>
<div class="t" style="left:523.3px;width:27.5px;text-align:right;top:368.65px;font-size:6.2px;color:#555">20</div>
<div style="left:553.3px;top:362.40px;width:140px;height:1px;background:#efefef"></div>
<div class="t" style="left:523.3px;width:27.5px;text-align:right;top:359.60px;font-size:6.2px;color:#555">40</div>
<div style="left:553.3px;top:353.35px;width:140px;height:1px;background:#efefef"></div>
<div class="t" style="left:523.3px;width:27.5px;text-align:right;top:350.55px;font-size:6.2px;color:#555">60</div>
<div style="left:553.3px;top:344.30px;width:140px;height:1px;background:#efefef"></div>
<div class="t" style="left:523.3px;width:27.5px;text-align:right;top:341.50px;font-size:6.2px;color:#555">80</div>
<div style="left:553.3px;top:335.25px;width:140px;height:1px;background:#efefef"></div>
<div class="t" style="left:523.3px;width:27.5px;text-align:right;top:332.45px;font-size:6.2px;color:#555">100</div>
<div style="left:553.3px;top:326.20px;width:140px;height:1px;background:#efefef"></div>
<div class="t" style="left:523.3px;width:27.5px;text-align:right;top:323.40px;font-size:6.2px;color:#555">120</div>
<div style="left:553.3px;top:380.5px;width:140px;height:1px;background:#8c8c8c"></div>
<div style="left:552.8px;top:326.7px;width:1px;height:54.8px;background:#555"></div>
<div style="left:553.3px;top:329.42px;width:10.2px;height:51.58px;background:linear-gradient(90deg,#a6cf7e,#5b9a2e);border:0.7px solid #44702a;border-bottom:none"></div>
<div style="left:563.3px;top:362.45px;width:10.2px;height:18.55px;background:linear-gradient(90deg,#6cb0e0,#2d74b4);border:0.7px solid #2a4f78;border-bottom:none"></div>
<div style="left:573.3px;top:377.83px;width:10.2px;height:3.17px;background:linear-gradient(90deg,#ecdca0,#c8b060);border:0.7px solid #a09040;border-bottom:none"></div>
<div style="left:540px;top:383px;width:158px;height:72px;overflow:hidden">
<div class="t" style="left:15.10px;top:1px;font-size:6.1px;letter-spacing:-0.18px;color:#555;transform-origin:0 0;transform:rotate(-90deg) translate(-100%,0);text-align:right">Entered Values</div>
<div class="t" style="left:25.10px;top:1px;font-size:6.1px;letter-spacing:-0.18px;color:#555;transform-origin:0 0;transform:rotate(-90deg) translate(-100%,0);text-align:right">Calculated Values</div>
<div class="t" style="left:35.10px;top:1px;font-size:6.1px;letter-spacing:-0.18px;color:#555;transform-origin:0 0;transform:rotate(-90deg) translate(-100%,0);text-align:right">Formulas</div>
<div class="t" style="left:45.10px;top:1px;font-size:6.1px;letter-spacing:-0.18px;color:#555;transform-origin:0 0;transform:rotate(-90deg) translate(-100%,0);text-align:right">SysGen Formulas</div>
<div class="t" style="left:55.10px;top:1px;font-size:6.1px;letter-spacing:-0.18px;color:#555;transform-origin:0 0;transform:rotate(-90deg) translate(-100%,0);text-align:right">SysGen Formulas (Errors)</div>
<div class="t" style="left:65.10px;top:1px;font-size:6.1px;letter-spacing:-0.18px;color:#555;transform-origin:0 0;transform:rotate(-90deg) translate(-100%,0);text-align:right">Structural</div>
<div class="t" style="left:75.10px;top:1px;font-size:6.1px;letter-spacing:-0.18px;color:#555;transform-origin:0 0;transform:rotate(-90deg) translate(-100%,0);text-align:right">Names</div>
<div class="t" style="left:85.10px;top:1px;font-size:6.1px;letter-spacing:-0.18px;color:#555;transform-origin:0 0;transform:rotate(-90deg) translate(-100%,0);text-align:right">SysGen Names</div>
<div class="t" style="left:95.10px;top:1px;font-size:6.1px;letter-spacing:-0.18px;color:#555;transform-origin:0 0;transform:rotate(-90deg) translate(-100%,0);text-align:right">SysGen Names (Errors)</div>
<div class="t" style="left:105.10px;top:1px;font-size:6.1px;letter-spacing:-0.18px;color:#555;transform-origin:0 0;transform:rotate(-90deg) translate(-100%,0);text-align:right">Macros</div>
<div class="t" style="left:115.10px;top:1px;font-size:6.1px;letter-spacing:-0.18px;color:#555;transform-origin:0 0;transform:rotate(-90deg) translate(-100%,0);text-align:right">Data Connections</div>
<div class="t" style="left:125.10px;top:1px;font-size:6.1px;letter-spacing:-0.18px;color:#555;transform-origin:0 0;transform:rotate(-90deg) translate(-100%,0);text-align:right">Cell Formats</div>
<div class="t" style="left:135.10px;top:1px;font-size:6.1px;letter-spacing:-0.18px;color:#555;transform-origin:0 0;transform:rotate(-90deg) translate(-100%,0);text-align:right">Cell Protection</div>
<div class="t" style="left:145.10px;top:1px;font-size:6.1px;letter-spacing:-0.18px;color:#555;transform-origin:0 0;transform:rotate(-90deg) translate(-100%,0);text-align:right">Sheet/Workbook Protection</div>
</div>
<div class="t" style="left:522.5px;top:395px;font-size:6.4px;color:#333;transform-origin:0 0;transform:rotate(-90deg)">Count</div>
<div style="left:1px;top:455.5px;width:698px;height:13px;background:#eef2f7;border-top:1px solid #a8a8a8"></div>
<div class="t" style="left:3.00px;top:459px;font-size:7px;color:#333;letter-spacing:-0.109px">Ready - File 1: [P and L 1990.xls] - File 2: [P and L 1991.xls] - Total Displayed Items: 159</div>
<svg style="left:690px;top:459px" width="8" height="8" viewBox="0 0 8 8"><g fill="#9aa"><rect x="6" y="2" width="1" height="1"/><rect x="4" y="4" width="1" height="1"/><rect x="6" y="4" width="1" height="1"/><rect x="2" y="6" width="1" height="1"/><rect x="4" y="6" width="1" height="1"/><rect x="6" y="6" width="1" height="1"/></g></svg>
</body></html>
